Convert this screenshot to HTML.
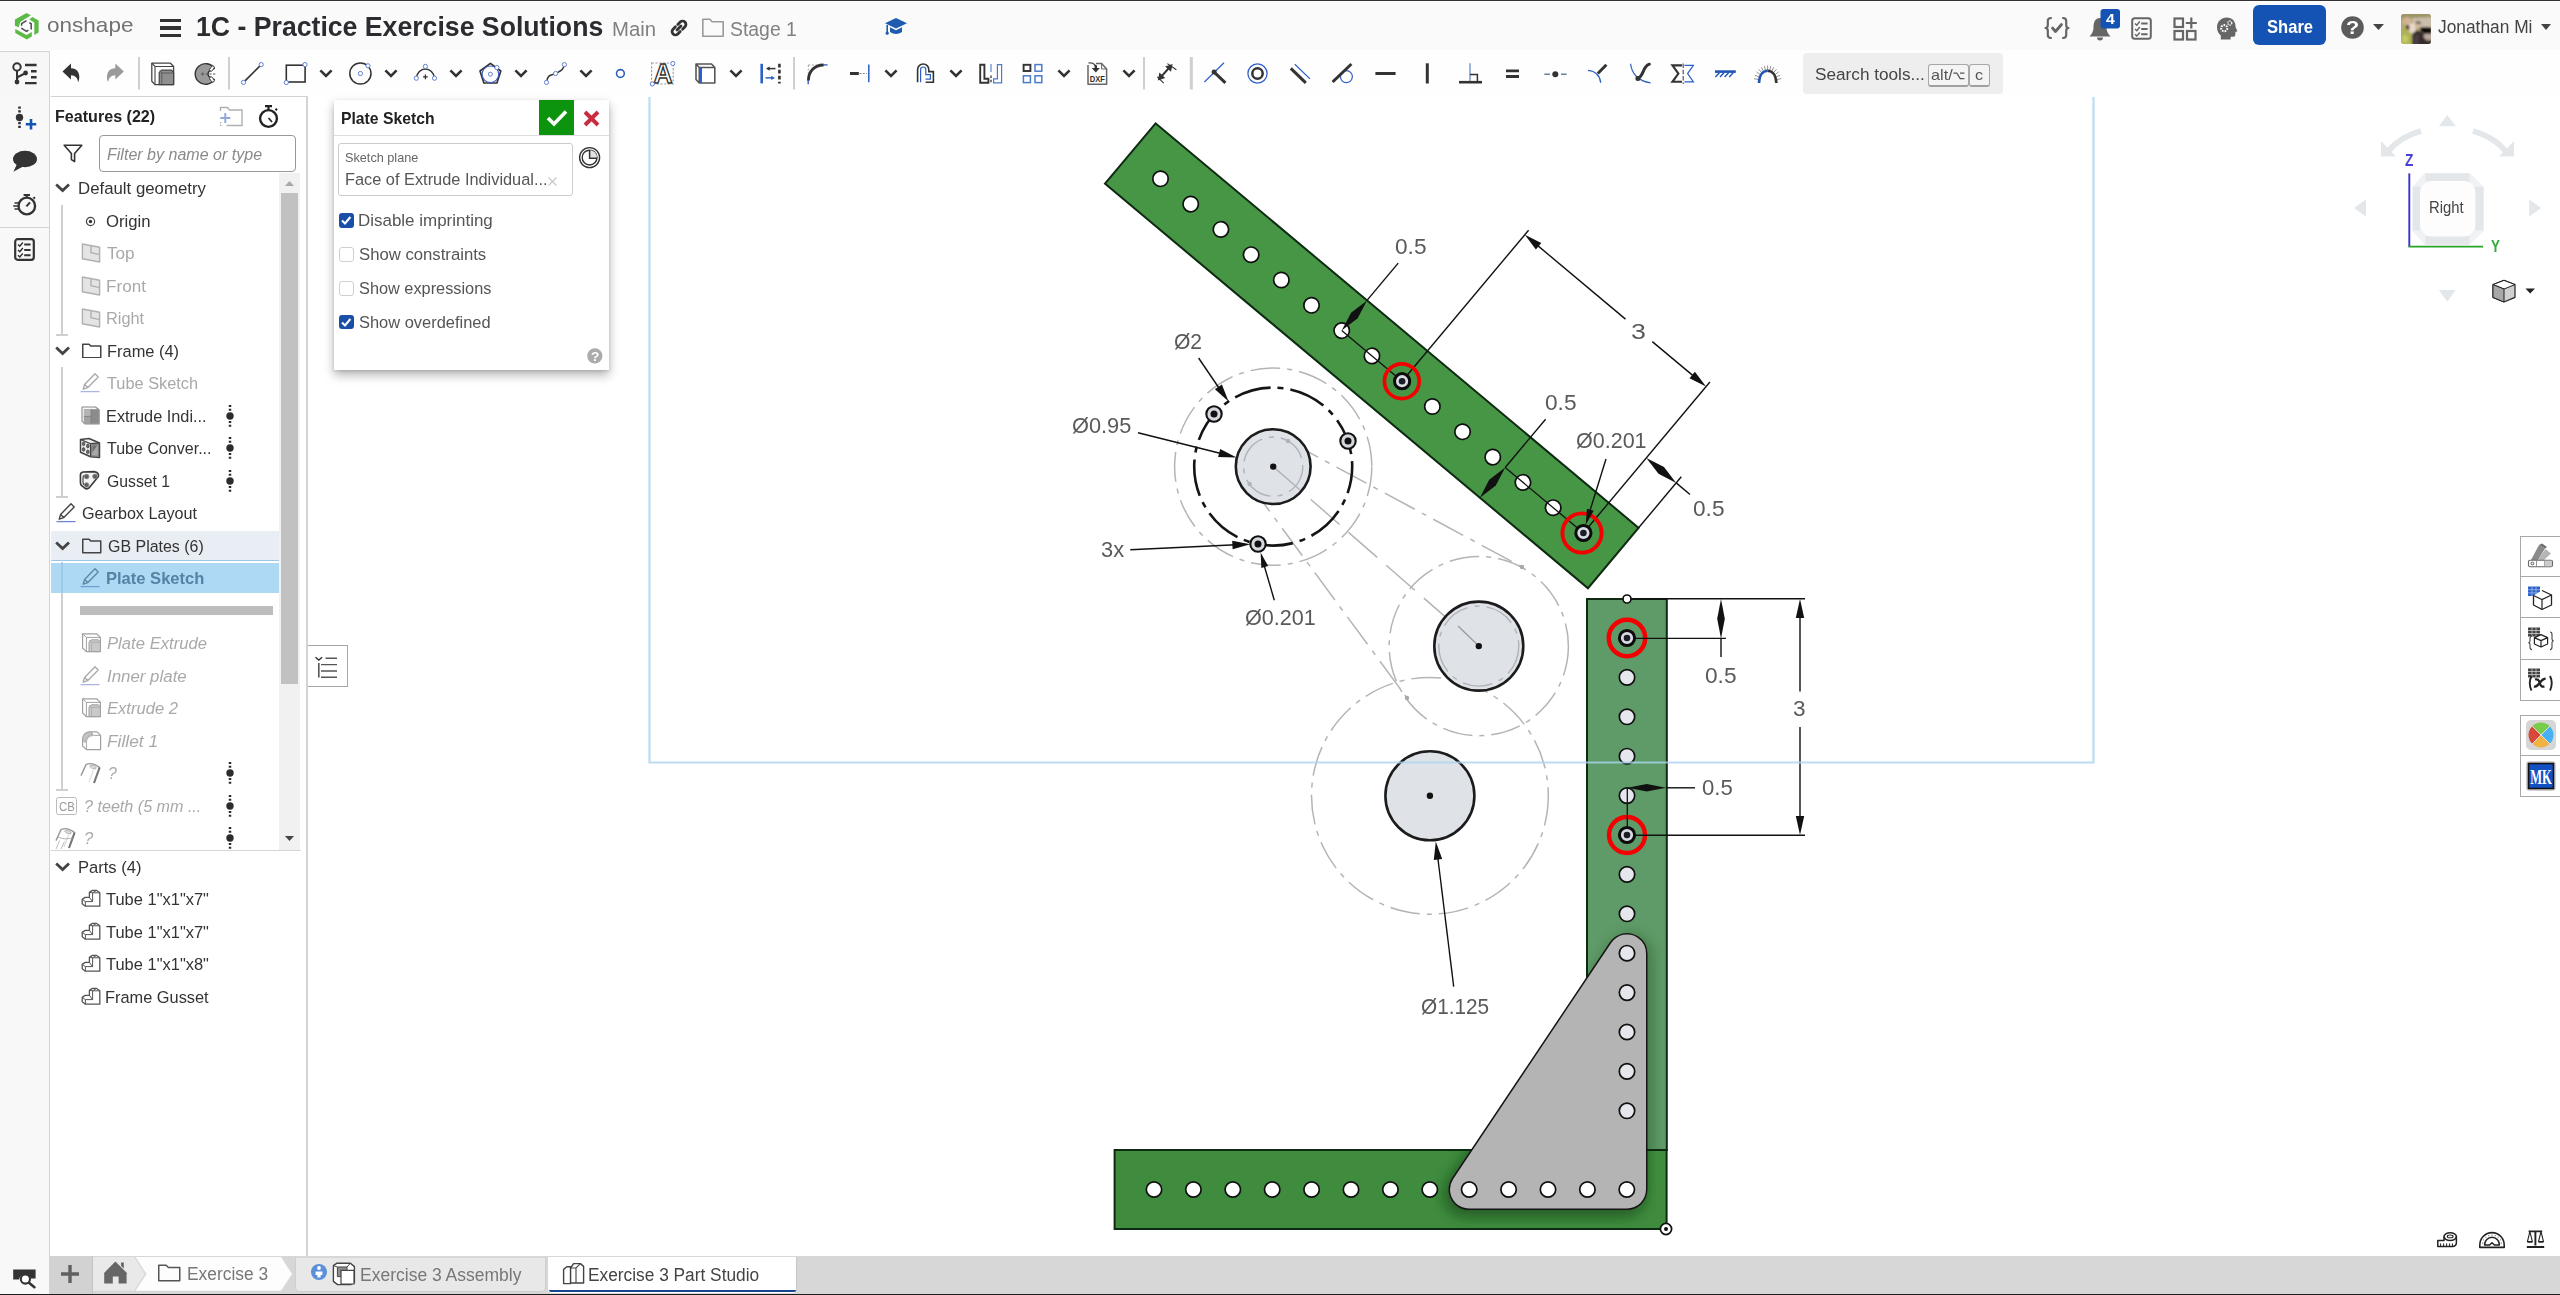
<!DOCTYPE html>
<html><head><meta charset="utf-8"><title>Onshape</title><style>
html,body{margin:0;padding:0;background:#fff;}
body{width:2560px;height:1295px;overflow:hidden;position:relative;font-family:"Liberation Sans",sans-serif;}
.b{position:absolute;display:block;}
.t{position:absolute;white-space:nowrap;line-height:1;transform-origin:0 50%;font-family:"Liberation Sans",sans-serif;}
</style></head><body>
<!-- canvas -->
<svg class="b" style="left:309px;top:97px" width="2251" height="1160" viewBox="309 97 2251 1160"><defs><filter id="gsh" x="-20%" y="-20%" width="140%" height="140%"><feGaussianBlur stdDeviation="7"/></filter><clipPath id="clipH"><rect x="1114" y="1150" width="552" height="79"/></clipPath><clipPath id="clipV"><rect x="1587" y="599" width="79.5" height="551"/></clipPath></defs><circle cx="1273.2" cy="466.6" r="98.6" fill="none" stroke="#b4b4b4" stroke-width="1.5" stroke-dasharray="30 7 5 7"/><circle cx="1478.8" cy="646.1" r="89.6" fill="none" stroke="#b4b4b4" stroke-width="1.5" stroke-dasharray="30 7 5 7"/><circle cx="1429.9" cy="795.8" r="118.4" fill="none" stroke="#b4b4b4" stroke-width="1.5" stroke-dasharray="30 7 5 7"/><path d="M1288.0 441.0 L1522.0 567.0" stroke="#b4b4b4" stroke-width="1.5" fill="none" stroke-dasharray="34 8 5 8"/><path d="M1249.6 484.0 L1407.0 698.0" stroke="#b4b4b4" stroke-width="1.5" fill="none" stroke-dasharray="34 8 5 8"/><path d="M1273.2 466.6 L1478.8 646.1" stroke="#b4b4b4" stroke-width="1.5" fill="none" stroke-dasharray="38 12"/><circle cx="1522" cy="567" r="2.2" fill="#a8a8a8"/><circle cx="1407" cy="698" r="2.2" fill="#a8a8a8"/><g transform="translate(1130.3,153.5) rotate(39.95)"><rect x="0" y="-39.4" width="630" height="78.8" fill="#469646" stroke="#0f2a12" stroke-width="2"/><circle cx="39.4" cy="0" r="7.7" fill="#fff" stroke="#101010" stroke-width="1.7"/><circle cx="78.8" cy="0" r="7.7" fill="#fff" stroke="#101010" stroke-width="1.7"/><circle cx="118.2" cy="0" r="7.7" fill="#fff" stroke="#101010" stroke-width="1.7"/><circle cx="157.6" cy="0" r="7.7" fill="#fff" stroke="#101010" stroke-width="1.7"/><circle cx="197.0" cy="0" r="7.7" fill="#fff" stroke="#101010" stroke-width="1.7"/><circle cx="236.4" cy="0" r="7.7" fill="#fff" stroke="#101010" stroke-width="1.7"/><circle cx="275.8" cy="0" r="7.7" fill="#fff" stroke="#101010" stroke-width="1.7"/><circle cx="315.2" cy="0" r="7.7" fill="#fff" stroke="#101010" stroke-width="1.7"/><circle cx="354.6" cy="0" r="7.7" fill="#fff" stroke="#101010" stroke-width="1.7"/><circle cx="394.0" cy="0" r="7.7" fill="#fff" stroke="#101010" stroke-width="1.7"/><circle cx="433.4" cy="0" r="7.7" fill="#fff" stroke="#101010" stroke-width="1.7"/><circle cx="472.8" cy="0" r="7.7" fill="#fff" stroke="#101010" stroke-width="1.7"/><circle cx="512.2" cy="0" r="7.7" fill="#fff" stroke="#101010" stroke-width="1.7"/><circle cx="551.6" cy="0" r="7.7" fill="#fff" stroke="#101010" stroke-width="1.7"/><circle cx="591.0" cy="0" r="7.7" fill="#fff" stroke="#101010" stroke-width="1.7"/></g><rect x="1114.6" y="1150" width="552" height="79" fill="#3f8c3f" stroke="#0f2a12" stroke-width="2"/><rect x="1587" y="599" width="79.8" height="551" fill="#5f9b68" stroke="#0f2a12" stroke-width="2"/><g clip-path="url(#clipH)"><path d="M1627 953.5 L1627 1189.5 L1469 1189.5 Z" transform="translate(-3,5)" fill="#0a300a" stroke="#0a300a" stroke-width="44" stroke-linejoin="round" filter="url(#gsh)" opacity="0.55"/></g><g clip-path="url(#clipV)"><path d="M1627 953.5 L1627 1189.5 L1469 1189.5 Z" transform="translate(3,3)" fill="#0a300a" stroke="#0a300a" stroke-width="44" stroke-linejoin="round" filter="url(#gsh)" opacity="0.35"/></g><path d="M1627 953.5 L1627 1189.5 L1469 1189.5 Z" fill="#151515" stroke="#151515" stroke-width="41" stroke-linejoin="round"/><path d="M1627 953.5 L1627 1189.5 L1469 1189.5 Z" fill="#b4b4b4" stroke="#b4b4b4" stroke-width="38" stroke-linejoin="round"/><circle cx="1154.0" cy="1189.5" r="7.7" fill="#fff" stroke="#101010" stroke-width="1.7"/><circle cx="1193.4" cy="1189.5" r="7.7" fill="#fff" stroke="#101010" stroke-width="1.7"/><circle cx="1232.8" cy="1189.5" r="7.7" fill="#fff" stroke="#101010" stroke-width="1.7"/><circle cx="1272.2" cy="1189.5" r="7.7" fill="#fff" stroke="#101010" stroke-width="1.7"/><circle cx="1311.6" cy="1189.5" r="7.7" fill="#fff" stroke="#101010" stroke-width="1.7"/><circle cx="1351.0" cy="1189.5" r="7.7" fill="#fff" stroke="#101010" stroke-width="1.7"/><circle cx="1390.4" cy="1189.5" r="7.7" fill="#fff" stroke="#101010" stroke-width="1.7"/><circle cx="1429.8" cy="1189.5" r="7.7" fill="#fff" stroke="#101010" stroke-width="1.7"/><circle cx="1469.2" cy="1189.5" r="7.7" fill="#fff" stroke="#101010" stroke-width="1.7"/><circle cx="1508.6" cy="1189.5" r="7.7" fill="#fff" stroke="#101010" stroke-width="1.7"/><circle cx="1548.0" cy="1189.5" r="7.7" fill="#fff" stroke="#101010" stroke-width="1.7"/><circle cx="1587.4" cy="1189.5" r="7.7" fill="#fff" stroke="#101010" stroke-width="1.7"/><circle cx="1626.8" cy="1189.5" r="7.7" fill="#fff" stroke="#101010" stroke-width="1.7"/><circle cx="1627.0" cy="677.4" r="7.7" fill="#e5e7ec" stroke="#101010" stroke-width="1.7"/><circle cx="1627.0" cy="716.8" r="7.7" fill="#e5e7ec" stroke="#101010" stroke-width="1.7"/><circle cx="1627.0" cy="756.2" r="7.7" fill="#e5e7ec" stroke="#101010" stroke-width="1.7"/><circle cx="1627.0" cy="795.6" r="7.7" fill="#e5e7ec" stroke="#101010" stroke-width="1.7"/><circle cx="1627.0" cy="874.4" r="7.7" fill="#e5e7ec" stroke="#101010" stroke-width="1.7"/><circle cx="1627.0" cy="913.8" r="7.7" fill="#e5e7ec" stroke="#101010" stroke-width="1.7"/><circle cx="1627.0" cy="953.2" r="7.7" fill="#e5e7ec" stroke="#101010" stroke-width="1.7"/><circle cx="1627.0" cy="992.6" r="7.7" fill="#e5e7ec" stroke="#101010" stroke-width="1.7"/><circle cx="1627.0" cy="1032.0" r="7.7" fill="#e5e7ec" stroke="#101010" stroke-width="1.7"/><circle cx="1627.0" cy="1071.4" r="7.7" fill="#e5e7ec" stroke="#101010" stroke-width="1.7"/><circle cx="1627.0" cy="1110.8" r="7.7" fill="#e5e7ec" stroke="#101010" stroke-width="1.7"/><circle cx="1273.2" cy="466.6" r="79" fill="none" stroke="#151515" stroke-width="2.6" stroke-dasharray="37 7 6 7" stroke-dashoffset="10"/><circle cx="1273.2" cy="466.6" r="37.4" fill="#dfe3e8" stroke="#1c1c1c" stroke-width="2.6"/><circle cx="1478.8" cy="646.1" r="44.5" fill="#dfe3e8" stroke="#1c1c1c" stroke-width="2.6"/><circle cx="1429.9" cy="795.8" r="44.5" fill="#dfe3e8" stroke="#1c1c1c" stroke-width="2.6"/><circle cx="1273.2" cy="466.6" r="29.6" fill="none" stroke="#b0b3b8" stroke-width="1.4" stroke-dasharray="30 7 5 7"/><circle cx="1478.8" cy="646.1" r="40" fill="none" stroke="#b0b3b8" stroke-width="1.4" stroke-dasharray="30 7 5 7"/><path d="M1273.2 466.6 L1300.0 490.0" stroke="#b0b3b8" stroke-width="1.4" fill="none"/><path d="M1478.8 646.1 L1458.0 626.0" stroke="#9a9da2" stroke-width="1.4" fill="none"/><circle cx="1288" cy="441" r="2.2" fill="#b0b3b8"/><circle cx="1249.6" cy="484" r="2.2" fill="#b0b3b8"/><circle cx="1273.2" cy="466.6" r="3.2" fill="#111"/><circle cx="1478.8" cy="646.1" r="3.2" fill="#111"/><circle cx="1429.9" cy="795.8" r="3.2" fill="#111"/><circle cx="1214" cy="414" r="7.7" fill="#d4d7de" stroke="#111" stroke-width="2.1"/><circle cx="1214" cy="414" r="3.5" fill="#111"/><circle cx="1348" cy="441" r="7.7" fill="#d4d7de" stroke="#111" stroke-width="2.1"/><circle cx="1348" cy="441" r="3.5" fill="#111"/><circle cx="1258" cy="544" r="7.7" fill="#d4d7de" stroke="#111" stroke-width="2.1"/><circle cx="1258" cy="544" r="3.5" fill="#111"/><path d="M1341.7 330.6 L1402.1 381.2" stroke="#111" stroke-width="1.3" fill="none"/><path d="M1505.2 467.5 L1583.4 533.0" stroke="#111" stroke-width="1.3" fill="none"/><path d="M1402.1 381.2 L1528.6 230.2" stroke="#111" stroke-width="1.4" fill="none"/><path d="M1583.4 533.0 L1709.9 382.0" stroke="#111" stroke-width="1.4" fill="none"/><path d="M1530.9 239.9 L1625.5 319.1" stroke="#111" stroke-width="1.4" fill="none"/><path d="M1652.3 341.6 L1699.9 381.4" stroke="#111" stroke-width="1.4" fill="none"/><path d="M1524.8 234.8 L1541.3 243.1 L1535.9 249.6 Z" fill="#111"/><path d="M1706.0 386.6 L1689.5 378.2 L1694.9 371.8 Z" fill="#111"/><path d="M1367.0 300.4 L1398.2 263.1" stroke="#111" stroke-width="1.4" fill="none"/><path d="M1341.7 330.6 L1357.7 318.3 L1367.0 300.4 L1351.1 312.7 Z" fill="#111"/><path d="M1545.6 419.2 L1505.2 467.5" stroke="#111" stroke-width="1.4" fill="none"/><path d="M1505.2 467.5 L1489.2 479.8 L1479.9 497.7 L1495.8 485.4 Z" fill="#111"/><path d="M1638.6 527.8 L1681.3 476.8" stroke="#111" stroke-width="1.4" fill="none"/><path d="M1646.3 457.9 L1658.5 473.7 L1676.2 482.9 L1664.0 467.1 Z" fill="#111"/><path d="M1676.2 482.9 L1690.0 494.5" stroke="#111" stroke-width="1.4" fill="none"/><circle cx="1402.1" cy="381.2" r="7.6" fill="#d8dbe2" stroke="#0c0c0c" stroke-width="3"/><circle cx="1402.1" cy="381.2" r="3.3" fill="#1c1c24"/><circle cx="1401.8" cy="381.2" r="17.4" fill="none" stroke="#f40000" stroke-width="3.7"/><circle cx="1583.4" cy="533.0" r="7.6" fill="#d8dbe2" stroke="#0c0c0c" stroke-width="3"/><circle cx="1583.4" cy="533.0" r="3.3" fill="#1c1c24"/><circle cx="1582.0" cy="533.0" r="19.6" fill="none" stroke="#f40000" stroke-width="3.9"/><circle cx="1627.0" cy="638.0" r="7.6" fill="#d8dbe2" stroke="#0c0c0c" stroke-width="3"/><circle cx="1627.0" cy="638.0" r="3.3" fill="#1c1c24"/><circle cx="1627.0" cy="638.0" r="18.2" fill="none" stroke="#f40000" stroke-width="4.5"/><circle cx="1627.0" cy="835.0" r="7.6" fill="#d8dbe2" stroke="#0c0c0c" stroke-width="3"/><circle cx="1627.0" cy="835.0" r="3.3" fill="#1c1c24"/><circle cx="1627.0" cy="835.0" r="18.0" fill="none" stroke="#f40000" stroke-width="4.4"/><path d="M1606.0 459.0 L1588.0 517.0" stroke="#111" stroke-width="1.4" fill="none"/><path d="M1585.6 525.0 L1587.0 508.7 L1593.7 510.7 Z" fill="#111"/><path d="M1198.6 358.0 L1221.0 391.0" stroke="#111" stroke-width="1.4" fill="none"/><path d="M1228.6 401.6 L1214.9 389.2 L1221.9 384.4 Z" fill="#111"/><path d="M1138.0 432.8 L1222.0 453.8" stroke="#111" stroke-width="1.4" fill="none"/><path d="M1236.6 457.4 L1218.1 457.1 L1220.2 449.0 Z" fill="#111"/><path d="M1130.3 549.8 L1236.0 544.8" stroke="#111" stroke-width="1.4" fill="none"/><path d="M1250.4 544.2 L1232.6 549.2 L1232.2 540.8 Z" fill="#111"/><path d="M1274.3 600.2 L1264.0 565.0" stroke="#111" stroke-width="1.4" fill="none"/><path d="M1260.6 552.6 L1268.1 566.0 L1261.4 568.0 Z" fill="#111"/><path d="M1453.7 986.6 L1437.6 856.0" stroke="#111" stroke-width="1.4" fill="none"/><path d="M1435.8 841.6 L1442.2 858.9 L1433.8 860.0 Z" fill="#111"/><path d="M1631.5 598.8 L1805.0 598.8" stroke="#111" stroke-width="1.4" fill="none"/><path d="M1636.0 638.4 L1726.0 638.4" stroke="#111" stroke-width="1.4" fill="none"/><path d="M1636.0 835.2 L1805.0 835.2" stroke="#111" stroke-width="1.4" fill="none"/><path d="M1721.0 599.0 L1717.2 618.7 L1721.0 638.4 L1724.8 618.7 Z" fill="#111"/><path d="M1721.0 638.0 L1721.0 657.0" stroke="#111" stroke-width="1.4" fill="none"/><path d="M1800.0 612.0 L1800.0 691.5" stroke="#111" stroke-width="1.4" fill="none"/><path d="M1800.0 727.0 L1800.0 822.0" stroke="#111" stroke-width="1.4" fill="none"/><path d="M1800.0 599.0 L1804.2 618.0 L1795.8 618.0 Z" fill="#111"/><path d="M1800.0 835.0 L1795.8 816.0 L1804.2 816.0 Z" fill="#111"/><path d="M1627.5 787.8 L1646.8 791.5 L1666.0 787.8 L1646.8 784.0 Z" fill="#111"/><path d="M1666.0 787.8 L1695.0 787.8" stroke="#111" stroke-width="1.4" fill="none"/><path d="M1627.3 788.0 L1627.3 826.0" stroke="#111" stroke-width="1.3" fill="none"/><circle cx="1627" cy="599" r="4" fill="#fff" stroke="#111" stroke-width="1.7"/><circle cx="1666" cy="1229" r="5.6" fill="#fff" stroke="#111" stroke-width="1.7"/><circle cx="1666" cy="1229" r="2" fill="#111"/><path d="M649.5 97 V762.5 H2093.5 V97" fill="none" stroke="#a9d4f0" stroke-opacity="0.8" stroke-width="2.2"/></svg><span class="t" style="left:1394.71px;transform:scaleX(1.0502);top:236px;font-size:21.6px;color:#5a5a5a;">0.5</span><span class="t" style="left:1630.88px;transform:scaleX(1.2398);top:321px;font-size:21.6px;color:#5a5a5a;">3</span><span class="t" style="left:1544.51px;transform:scaleX(1.0502);top:392px;font-size:21.6px;color:#5a5a5a;">0.5</span><span class="t" style="left:1576.25px;transform:scaleX(0.9965);top:430px;font-size:21.6px;color:#5a5a5a;">Ø0.201</span><span class="t" style="left:1693.11px;transform:scaleX(1.0502);top:498px;font-size:21.6px;color:#5a5a5a;">0.5</span><span class="t" style="left:1173.57px;transform:scaleX(0.9749);top:331px;font-size:21.6px;color:#5a5a5a;">Ø2</span><span class="t" style="left:1071.65px;transform:scaleX(1.0075);top:415px;font-size:21.6px;color:#5a5a5a;">Ø0.95</span><span class="t" style="left:1100.57px;transform:scaleX(1.0111);top:539px;font-size:21.6px;color:#5a5a5a;">3x</span><span class="t" style="left:1244.65px;transform:scaleX(0.9994);top:607px;font-size:21.6px;color:#5a5a5a;">Ø0.201</span><span class="t" style="left:1705.01px;transform:scaleX(1.0502);top:665px;font-size:21.6px;color:#5a5a5a;">0.5</span><span class="t" style="left:1793.44px;transform:scaleX(1.0445);top:698px;font-size:21.6px;color:#5a5a5a;">3</span><span class="t" style="left:1701.93px;transform:scaleX(1.0254);top:777px;font-size:21.6px;color:#5a5a5a;">0.5</span><span class="t" style="left:1421.28px;transform:scaleX(0.9612);top:996px;font-size:21.6px;color:#5a5a5a;">Ø1.125</span>
<!-- chrome -->
<div class="b" style="left:0px;top:0px;width:2560px;height:1px;background:#333"></div>
<div class="b" style="left:0px;top:2px;width:2560px;height:48px;background:#fafafa"></div>
<div class="b" style="left:0px;top:50px;width:2560px;height:47px;background:#fefefe"></div>
<div class="b" style="left:0px;top:51px;width:50px;height:1244px;background:#f8f8f8;border-right:1px solid #d4d4d4;border-top:1px solid #d4d4d4;box-sizing:border-box"></div>
<div class="b" style="left:0px;top:51px;width:50px;height:46px;background:#f7f7f7;border-right:1px solid #d4d4d4;border-top:1px solid #d4d4d4;box-sizing:border-box"></div>
<div class="b" style="left:0px;top:227px;width:50px;height:1px;background:#d4d4d4"></div>
<div class="b" style="left:51px;top:96px;width:257px;height:1161px;background:#fff;border-top:1.5px solid #d2d2d2;border-right:2px solid #d3d3d3;box-sizing:border-box"></div>
<svg class="b" style="left:8px;top:6px" width="40" height="40" viewBox="8 6 40 40"><g fill="#5cba47"><path d="M26.5 12.9 L30.9 15.3 L20.2 21.9 L18.7 27.3 L14.9 25.8 L14.9 19.6 Z"/><path d="M32.4 17 L38.6 20.4 L38.6 32.6 L34.3 35 L34.3 22.4 L29.3 19.4 Z"/><path d="M15.3 29 L26.5 34.9 L31.8 31.9 L31.8 36.4 L26.8 39.4 L15.3 32.9 Z"/></g><path d="M21.6 25.8 V23.6 L26.5 20.7 M29.3 22.7 L31.2 23.8 V29.5 M21.3 28.2 L26.5 31.3 L28.4 30.1" fill="none" stroke="#4c4c4c" stroke-width="1.5"/></svg>
<span class="t" style="left:47.35px;transform:scaleX(1.0728);top:14px;font-size:21px;color:#727272;">onshape</span>
<div class="b" style="left:160.3px;top:19.0px;width:20.4px;height:3.3px;background:#333"></div>
<div class="b" style="left:160.3px;top:26.4px;width:20.4px;height:3.3px;background:#333"></div>
<div class="b" style="left:160.3px;top:33.8px;width:20.4px;height:3.3px;background:#333"></div>
<span class="t" style="left:195.82px;transform:scaleX(0.9516);top:13px;font-size:28px;color:#2b2b30;font-weight:bold;">1C - Practice Exercise Solutions</span>
<span class="t" style="left:612.34px;transform:scaleX(0.9898);top:19px;font-size:20.5px;color:#808080;">Main</span>
<svg class="b" style="left:669px;top:18px;" width="20" height="20" viewBox="0 0 20 20"><g fill="none" stroke="#333" stroke-width="2.5" stroke-linecap="round" transform="rotate(-45 10 10) translate(10 10) scale(1.12) translate(-10 -10)"><path d="M8.5 7 H5.5 a3 3 0 0 0 0 6 H8.5"/><path d="M11.5 7 H14.5 a3 3 0 0 1 0 6 H11.5"/><path d="M7.5 10 H12.5"/></g></svg>
<svg class="b" style="left:702px;top:18px;" width="22" height="19" viewBox="0 0 22 19"><path d="M0.8 18.2 V1.3 H7.92 L10.120000000000001 3.8000000000000003 H21.2 V18.2 Z" fill="none" stroke="#999" stroke-width="1.6" stroke-linejoin="round"/></svg>
<span class="t" style="left:730.12px;transform:scaleX(0.9456);top:19px;font-size:20.5px;color:#808080;">Stage 1</span>
<svg class="b" style="left:885px;top:17px;" width="23" height="20" viewBox="0 0 23 20"><path d="M11 1 L22 6.2 L11 11.4 L0 6.2 Z" fill="#1f5cb0"/><path d="M5 10.3 V15 Q11 19 17 15 V10.3 L11 13.2 Z" fill="#1f5cb0"/><path d="M2.2 8 V15.5" stroke="#1f5cb0" stroke-width="1.6"/><circle cx="2.2" cy="16.2" r="1.6" fill="#1f5cb0"/></svg>
<svg class="b" style="left:2043.5px;top:16.4px;" width="26" height="24" viewBox="0 0 26 24"><g fill="none" stroke="#666" stroke-width="2.2" stroke-linecap="round" stroke-linejoin="round"><path d="M7 2 Q3.8 2 3.8 5 V9 Q3.8 12 1.5 12 Q3.8 12 3.8 15 V19 Q3.8 22 7 22"/><path d="M19 2 Q22.2 2 22.2 5 V9 Q22.2 12 24.5 12 Q22.2 12 22.2 15 V19 Q22.2 22 19 22"/><path d="M8.5 12 L11.5 15.5 L17.5 8.5" stroke-width="2.8"/></g></svg>
<svg class="b" style="left:2088px;top:9px;" width="33" height="33" viewBox="0 0 33 33"><path d="M12 9 C7 9 5.5 13.5 5.5 18 C5.5 23 3.5 25 1.5 27.5 H22.5 C20.5 25 18.5 23 18.5 18 C18.5 13.5 17 9 12 9 Z" fill="#666"/><path d="M9 28.5 a3 3 0 0 0 6 0 Z" fill="#666"/><rect x="12.5" y="0" width="19.5" height="19.5" rx="3" fill="#1452b3"/></svg><span class="t" style="left:2105.96px;transform:scaleX(1.0924);top:12px;font-size:14.5px;color:#fff;font-weight:bold;">4</span>
<svg class="b" style="left:2131px;top:17px;" width="22" height="24" viewBox="0 0 22 24"><rect x="1.2" y="1.2" width="18.6" height="20.6" rx="2.5" fill="none" stroke="#666" stroke-width="2"/><g stroke="#666" stroke-width="2" fill="none"><path d="M10.2 6.5 H16.6 M10.2 12 H16.6 M10.2 17.3 H16.6"/><path d="M4 6.5 L5.8 8.2 L8.8 4.6 M4 12 L5.8 13.7 L8.8 10.1 M4 17.3 L5.8 19 L8.8 15.4" stroke-width="1.5"/></g></svg>
<svg class="b" style="left:2172.6px;top:16.8px;" width="25" height="24" viewBox="0 0 25 24"><g fill="none" stroke="#666" stroke-width="2.2"><rect x="1.5" y="1.5" width="8.5" height="8.5"/><rect x="1.5" y="14" width="8.5" height="8.5"/><rect x="14" y="14" width="8.5" height="8.5"/><path d="M18.3 0.5 V11.5 M12.8 6 H23.8"/></g></svg>
<svg class="b" style="left:2216px;top:17px;" width="23" height="24" viewBox="0 0 23 24"><path d="M11 0.6 C4.8 0.6 1 5 1 10.4 C1 14.2 2.8 16.6 4.8 18.4 V22.6 H14.6 V19.8 H17.4 Q19.4 19.8 19.4 17.8 V15 L21.4 14.2 L19.6 10 C19.6 4.4 16.2 0.6 11 0.6 Z" fill="#666"/><circle cx="8.2" cy="11.2" r="3.1" fill="none" stroke="#fafafa" stroke-width="2" stroke-dasharray="1.7 1"/><circle cx="13.8" cy="6" r="2" fill="none" stroke="#fafafa" stroke-width="1.4" stroke-dasharray="1.2 0.8"/></svg>
<div class="b" style="left:2253px;top:5px;width:73px;height:40px;background:#1452b3;border-radius:6px"></div>
<span class="t" style="left:2266.82px;transform:scaleX(0.8954);top:18px;font-size:18.5px;color:#fff;font-weight:bold;">Share</span>
<svg class="b" style="left:2341px;top:16px;" width="23" height="23" viewBox="0 0 23 23"><circle cx="11.5" cy="11.5" r="11.3" fill="#5c5c5c"/></svg><span class="t" style="left:2346.01px;transform:scaleX(1.1705);top:19px;font-size:18.5px;color:#fff;font-weight:bold;">?</span>
<svg class="b" style="left:2373px;top:24px;" width="11" height="6" viewBox="0 0 11 6"><path d="M0 0 H11 L5.5 6 Z" fill="#444"/></svg>
<svg class="b" style="left:2401px;top:14px;" width="30" height="30" viewBox="0 0 30 30"><defs><clipPath id="avc"><rect x="0" y="0" width="30" height="30" rx="2.5"/></clipPath><filter id="avb" x="-20%" y="-20%" width="140%" height="140%"><feGaussianBlur stdDeviation="0.9"/></filter></defs><g clip-path="url(#avc)"><g filter="url(#avb)"><rect x="-4" y="-4" width="38" height="38" fill="#b3a67c"/><rect x="-4" y="-4" width="38" height="8" fill="#9c9462"/><path d="M11 4 L31 3 L31 15 L20 13 L12 9 Z" fill="#cbbdab"/><ellipse cx="6" cy="7.5" rx="4.6" ry="4.4" fill="#d0b391"/><path d="M-2 13 L6 14 L11 19 L11 32 L-2 32 Z" fill="#aeb058"/><ellipse cx="4" cy="25" rx="3.2" ry="4" fill="#c4ca62"/><path d="M8 10 L14 9 L15 17 L11 20 L7 16 Z" fill="#ead9cd"/><path d="M4.6 11.4 L8 11 L8.6 15.4 L6 15.6 Z" fill="#2a2116"/><path d="M14.5 8.6 Q17.5 5.6 20.4 9.6 L19.4 10.6 Q17.4 8 15.4 10 Z" fill="#4a4030"/><path d="M14 10.4 L21.4 13.6 L20.4 15.4 L13.6 12.4 Z" fill="#d6bb96"/><path d="M11 20 L16 16 L22 19 L31 18 L31 32 L11 32 Z" fill="#362b2a"/><path d="M19 13.6 L24 13 L31 13.6 L31 19.4 L24 19.6 L19 17 Z" fill="#0b0b0b"/><path d="M23 20 L31 19.6 L31 26 L26 26.6 L22.6 23.6 Z" fill="#b8a89e"/><path d="M13 21 L18 20 L18 32 L12 32 Z" fill="#4a3c40"/></g></g></svg>
<span class="t" style="left:2438.33px;transform:scaleX(0.9905);top:19px;font-size:17.5px;color:#444;">Jonathan Mi</span>
<svg class="b" style="left:2541px;top:24px;" width="10" height="6" viewBox="0 0 10 6"><path d="M0 0 H10 L5.0 6 Z" fill="#444"/></svg>
<svg class="b" style="left:50px;top:52px" width="1750" height="45" viewBox="50 52 1750 45"><path d="M62.5 71.6 L71 63.6 V68.3 C77.5 68.3 81.5 74.5 78.2 82.3 C77.6 78.3 75.5 75.3 71 75.2 V79.6 Z" fill="#333"/><path d="M62.5 71.6 L71 63.6 V68.3 C77.5 68.3 81.5 74.5 78.2 82.3 C77.6 78.3 75.5 75.3 71 75.2 V79.6 Z" fill="#9a9a9a" transform="translate(186.3,0) scale(-1,1)"/><rect x="138.0" y="57" width="2" height="32.5" fill="#cfcfcf"/><path d="M151.8 63.2 H170.5 L173.6 66.5 V84.6 H155 L151.8 81.3 Z" fill="#fff" stroke="#444" stroke-width="1.3" stroke-linejoin="round"/><path d="M151.8 63.2 L155 66.5 H173.6 M155 66.5 V84.6" fill="none" stroke="#444" stroke-width="1.1"/><path d="M159.2 72.6 L161.5 70.2 H171.6 L173.6 72.6 V84.6 H159.2 Z" fill="#8f8f8f" stroke="#444" stroke-width="1.2" stroke-linejoin="round"/><path d="M161.8 73 H173.4 M161.8 73 V84.4 M161.8 73 L159.6 70.6" fill="none" stroke="#555" stroke-width="0.9"/><path d="M214.3 68.3 A10.4 10.4 0 1 0 214.3 79.7 L209 76.6 A4.2 4.2 0 0 1 209 71.4 Z" fill="#9a9a9a" stroke="#333" stroke-width="1.4" stroke-linejoin="round"/><ellipse cx="211.9" cy="68.6" rx="3.1" ry="1.6" transform="rotate(-52 211.9 68.6)" fill="#fff" stroke="#333" stroke-width="0.9"/><ellipse cx="211.9" cy="79.4" rx="3.1" ry="1.6" transform="rotate(52 211.9 79.4)" fill="#fff" stroke="#333" stroke-width="0.9"/><path d="M202 74 H216.5" stroke="#555" stroke-width="1.1" stroke-dasharray="2.2 1.5"/><path d="M203.2 72.4 L201.2 74 L203.2 75.6" fill="none" stroke="#555" stroke-width="0.9"/><rect x="228.0" y="57" width="2" height="32.5" fill="#cfcfcf"/><path d="M243.5 82.4 L261.2 64.6" stroke="#333" stroke-width="1.6"/><circle cx="243.5" cy="82.4" r="2.1" fill="#fff" stroke="#5f7fd0" stroke-width="1.0"/><circle cx="261.2" cy="64.6" r="2.1" fill="#fff" stroke="#5f7fd0" stroke-width="1.0"/><rect x="286.3" y="65.2" width="18.8" height="16.8" fill="none" stroke="#333" stroke-width="1.6"/><circle cx="305" cy="64.6" r="2.1" fill="#fff" stroke="#5f7fd0" stroke-width="1.0"/><circle cx="286.3" cy="82.5" r="2.1" fill="#fff" stroke="#5f7fd0" stroke-width="1.0"/><path d="M320.4 70.3 L326 75.89999999999999 L331.6 70.3" fill="none" stroke="#333" stroke-width="2.6"/><circle cx="360.4" cy="73.5" r="10.6" fill="none" stroke="#333" stroke-width="1.5"/><circle cx="360.4" cy="73.5" r="2.1" fill="#fff" stroke="#5f7fd0" stroke-width="1.0"/><circle cx="368" cy="65.8" r="2.1" fill="#fff" stroke="#5f7fd0" stroke-width="1.0"/><path d="M385.4 70.3 L391 75.89999999999999 L396.6 70.3" fill="none" stroke="#333" stroke-width="2.6"/><path d="M416.3 77.9 A9.2 10.5 0 0 1 434.5 77.9" fill="none" stroke="#333" stroke-width="1.5"/><path d="M425.4 74.4 V79.2 M423 76.8 H427.8" stroke="#333" stroke-width="1.3"/><circle cx="416.3" cy="78.2" r="2.1" fill="#fff" stroke="#5f7fd0" stroke-width="1.0"/><circle cx="434.5" cy="78.2" r="2.1" fill="#fff" stroke="#5f7fd0" stroke-width="1.0"/><circle cx="425.4" cy="66.4" r="2.1" fill="#fff" stroke="#5f7fd0" stroke-width="1.0"/><path d="M450.4 70.3 L456 75.89999999999999 L461.6 70.3" fill="none" stroke="#333" stroke-width="2.6"/><path d="M490.4 63.4 L500.8 71 L496.9 83 H483.9 L480 71 Z" fill="none" stroke="#333" stroke-width="1.7" stroke-linejoin="round"/><circle cx="490.4" cy="74.3" r="8.3" fill="none" stroke="#3b5fc0" stroke-width="1.1"/><circle cx="490.4" cy="74.2" r="2" fill="#fff" stroke="#5f7fd0" stroke-width="1.0"/><circle cx="496.9" cy="67.6" r="2.1" fill="#fff" stroke="#5f7fd0" stroke-width="1.0"/><path d="M515.4 70.3 L521 75.89999999999999 L526.6 70.3" fill="none" stroke="#333" stroke-width="2.6"/><path d="M546.5 82.4 C547.5 73 553 75.5 555.6 73.5 C559 71.5 563.5 71 564.4 64.6" fill="none" stroke="#333" stroke-width="1.5"/><circle cx="546.5" cy="82.4" r="2.1" fill="#fff" stroke="#5f7fd0" stroke-width="1.0"/><circle cx="555.6" cy="73.5" r="2.1" fill="#fff" stroke="#5f7fd0" stroke-width="1.0"/><circle cx="564.4" cy="64.6" r="2.1" fill="#fff" stroke="#5f7fd0" stroke-width="1.0"/><path d="M580.4 70.3 L586 75.89999999999999 L591.6 70.3" fill="none" stroke="#333" stroke-width="2.6"/><circle cx="620.4" cy="73.5" r="3.9" fill="#fff" stroke="#2d5fc4" stroke-width="1.6"/><rect x="651.6" y="63" width="21.6" height="21" fill="none" stroke="#999" stroke-width="1.1" stroke-dasharray="2.2 1.6"/><text x="653.6" y="82.9" font-family="Liberation Sans, sans-serif" font-weight="bold" font-size="28" fill="#fff" stroke="#333" stroke-width="1.4" textLength="19" lengthAdjust="spacingAndGlyphs">A</text><circle cx="672.8" cy="63.5" r="2.1" fill="#fff" stroke="#5f7fd0" stroke-width="1.0"/><circle cx="652.3" cy="83.9" r="2.1" fill="#fff" stroke="#5f7fd0" stroke-width="1.0"/><path d="M696 64 H711.5 L714.8 67.5 V83 H699.3 L696 79.5 Z M696 64 L699.3 67.5 H714.8 M699.3 67.5 V83" fill="#fff" stroke="#555" stroke-width="1.6" stroke-linejoin="round"/><path d="M699.2 67.5 H702 V83 H699.2 Z" fill="#2d5fc4"/><path d="M730.4 70.3 L736 75.89999999999999 L741.6 70.3" fill="none" stroke="#333" stroke-width="2.6"/><rect x="760.4" y="63.8" width="2.6" height="19.6" fill="#2d5fc4"/><path d="M779.4 63.8 V83.4" stroke="#333" stroke-width="2.6" stroke-dasharray="3.6 2.4"/><path d="M775.5 68.6 H767.5" stroke="#333" stroke-width="1.5"/><path d="M766 68.6 L769.6 66.4 V70.8 Z" fill="#333"/><path d="M765.5 77.9 H773" stroke="#2d5fc4" stroke-width="1.5"/><path d="M775 77.9 L771.2 75.7 V80.1 Z" fill="#2d5fc4"/><rect x="793.0" y="57" width="2" height="32.5" fill="#cfcfcf"/><path d="M808.3 65 H827 M808.3 65 V84" stroke="#999" stroke-width="0.9" stroke-dasharray="2 1.6" fill="none"/><path d="M808.2 84.3 V80 M823 64.9 H827.6" stroke="#2d5fc4" stroke-width="1.3" fill="none"/><path d="M808.4 80.5 C808.6 71 814.5 65.2 823.5 65" fill="none" stroke="#333" stroke-width="2.8"/><path d="M850 73.5 H858.8" stroke="#333" stroke-width="3"/><path d="M859.5 73.5 H867" stroke="#888" stroke-width="1" stroke-dasharray="2 1.3"/><path d="M868.8 64.4 V82.2" stroke="#2d5fc4" stroke-width="1.5"/><path d="M885.4 70.3 L891 75.89999999999999 L896.6 70.3" fill="none" stroke="#333" stroke-width="2.6"/><path d="M917.6 82.2 V69.6 A5.6 5.6 0 0 1 928.8 69.6 V71.6 H933.4 V82.2 H925.6" fill="none" stroke="#333" stroke-width="1.6"/><path d="M920.6 82.2 V69.6 A2.6 2.6 0 0 1 925.8 69.6 V74.6 H930.4 V79.2 H925.6" fill="none" stroke="#2d5fc4" stroke-width="1.2"/><path d="M950.4 70.3 L956 75.89999999999999 L961.6 70.3" fill="none" stroke="#333" stroke-width="2.6"/><path d="M980.2 64.8 H984.4 V78.8 H988.4 V82.8 H980.2 Z" fill="none" stroke="#333" stroke-width="1.9"/><path d="M991 75.5 V83.5" stroke="#333" stroke-width="1.3" stroke-dasharray="2.6 1.6"/><path d="M991 64 V72" stroke="#4a7cc9" stroke-width="1.1"/><path d="M1001.6 64.6 H997.4 V78.8 H993.6 V82.9 H1001.6 Z" fill="none" stroke="#4a7cc9" stroke-width="1.2"/><rect x="1023.6" y="64.8" width="6.8" height="6.2" fill="none" stroke="#333" stroke-width="1.9"/><g fill="none" stroke="#4a7cc9" stroke-width="1.5"><rect x="1035" y="64.6" width="6.8" height="6.6"/><rect x="1023.4" y="75.8" width="7" height="6.8"/><rect x="1035" y="75.8" width="6.8" height="6.8"/></g><path d="M1058.4 70.3 L1064 75.89999999999999 L1069.6 70.3" fill="none" stroke="#333" stroke-width="2.6"/><path d="M1088 65 V84.2 H1106.6 V69 L1101.6 63.6 H1096" fill="#fff" stroke="#666" stroke-width="1.5" stroke-linejoin="round"/><path d="M1101.6 63.6 V69 H1106.6" fill="none" stroke="#666" stroke-width="1"/><path d="M1088.5 63 Q1095 62.5 1095.8 67.5" fill="none" stroke="#555" stroke-width="1.3"/><path d="M1094.6 64.5 V68 H1091.8 L1095.8 72.6 L1099.8 68 H1097 V65.5 Z" fill="#333"/><text x="1089.8" y="81.6" font-family="Liberation Sans, sans-serif" font-weight="bold" font-size="8.2" fill="#333" textLength="15.2" lengthAdjust="spacingAndGlyphs">DXF</text><path d="M1123.4 70.3 L1129 75.89999999999999 L1134.6 70.3" fill="none" stroke="#333" stroke-width="2.6"/><rect x="1143.0" y="57" width="2" height="32.5" fill="#cfcfcf"/><path d="M1160.6 77.4 L1169.8 67" stroke="#333" stroke-width="2"/><path d="M1157.8 80.4 L1159.4 72.6 L1165.2 78 Z M1172.6 64 L1171 71.8 L1165.2 66.4 Z" fill="#333"/><path d="M1157.2 76.8 L1163.8 83.2 M1167.4 63.6 L1176.4 69.8" stroke="#333" stroke-width="1.1"/><rect x="1189.8" y="57" width="3" height="32.5" fill="#cfcfcf"/><path d="M1204.4 82 L1224 62.7" stroke="#2d5fc4" stroke-width="1.2"/><path d="M1214.4 72.4 L1225.4 82.8" stroke="#333" stroke-width="3"/><circle cx="1214.1" cy="72" r="2.5" fill="#333"/><circle cx="1257.5" cy="73.5" r="9.6" fill="none" stroke="#2d5fc4" stroke-width="1.3"/><circle cx="1257.5" cy="73.5" r="5.2" fill="none" stroke="#333" stroke-width="2.5"/><path d="M1290.8 68.4 L1305.8 82.8" stroke="#333" stroke-width="3"/><path d="M1294.8 64.2 L1310 78.9" stroke="#2d5fc4" stroke-width="1.2"/><circle cx="1346.4" cy="76.6" r="6" fill="none" stroke="#2d5fc4" stroke-width="1.2"/><path d="M1332.6 82 L1351.4 64" stroke="#333" stroke-width="3"/><path d="M1375.4 73.5 H1395.6" stroke="#333" stroke-width="3"/><path d="M1427.3 63.3 V83.5" stroke="#333" stroke-width="3"/><path d="M1470 63.3 V82" stroke="#5b82c4" stroke-width="1.2"/><path d="M1470 74.6 H1477.4 V82" fill="none" stroke="#333" stroke-width="1.5"/><path d="M1459 82.2 H1482" stroke="#333" stroke-width="2.6"/><path d="M1506 70.8 H1519 M1506 76.5 H1519" stroke="#333" stroke-width="2.8"/><circle cx="1555.3" cy="74.2" r="3" fill="#333"/><path d="M1544.3 74.2 H1550 M1561 74.2 H1566.6" stroke="#6b7f9a" stroke-width="1.4"/><path d="M1588 70.3 C1595.5 71 1600 76 1600.7 82.7" fill="none" stroke="#2d5fc4" stroke-width="1.3"/><path d="M1597.8 73.6 L1606.4 64.8" stroke="#333" stroke-width="2.9"/><path d="M1630.6 63.8 C1631.5 73 1638 81.5 1650.6 82.8" fill="none" stroke="#2d5fc4" stroke-width="1.2"/><path d="M1638.2 78.4 C1645 74 1642 67 1649.4 64.2" fill="none" stroke="#333" stroke-width="2.9" stroke-linecap="round"/><circle cx="1637.9" cy="78.5" r="2.5" fill="#333"/><path d="M1682 65.4 H1672.4 L1678.4 73.6 L1672.4 81.8 H1682" fill="none" stroke="#333" stroke-width="2.1"/><path d="M1684.4 65.4 H1693.4 L1687.6 73.6 L1693.4 81.8 H1684.4" fill="none" stroke="#2d5fc4" stroke-width="1.2"/><path d="M1683.2 63.5 V84" stroke="#555" stroke-width="1.2" stroke-dasharray="4.5 1.8"/><path d="M1715 71.6 H1735.8" stroke="#1f55b5" stroke-width="2.6"/><path d="M1719.4 72.8 L1715.4 77 M1724 72.8 L1720 77 M1728.6 72.8 L1724.6 77 M1733.2 72.8 L1729.2 77" stroke="#1f55b5" stroke-width="1.4"/><path d="M1759.1 79.6 L1754.0 78.7 M1759.7 77.2 L1754.9 75.2 M1760.7 75.1 L1756.5 71.9 M1762.1 73.2 L1758.7 69.2 M1763.7 71.8 L1761.4 67.2 M1765.6 71.0 L1764.4 65.9 M1767.6 70.7 L1767.6 65.5 M1769.6 71.0 L1770.8 65.9 M1771.5 71.8 L1773.8 67.2 M1773.1 73.2 L1776.5 69.2 M1774.5 75.1 L1778.7 71.9 M1775.5 77.2 L1780.3 75.2 M1776.1 79.6 L1781.2 78.7 " stroke="#888" stroke-width="0.9"/><path d="M1759 83 C1759.4 75 1763 70.8 1767.6 70.8" fill="none" stroke="#1f55b5" stroke-width="2.6"/><path d="M1767.6 70.8 C1772.2 70.8 1775.8 75 1776.4 83" fill="none" stroke="#333" stroke-width="2.6"/></svg>
<div class="b" style="left:1803px;top:53px;width:200px;height:41px;background:#eeeeee;border-radius:4px"></div>
<span class="t" style="left:1814.92px;transform:scaleX(0.9998);top:66px;font-size:17.2px;color:#444;">Search tools...</span>
<div class="b" style="left:1928px;top:64px;width:41px;height:22.5px;background:#f4f4f4;border:1px solid #a8a8a8;border-bottom:2px solid #a0a0a0;border-radius:3px;box-sizing:border-box"></div>
<div class="b" style="left:1969px;top:64px;width:21px;height:22.5px;background:#f4f4f4;border:1px solid #a8a8a8;border-bottom:2px solid #a0a0a0;border-radius:3px;box-sizing:border-box"></div>
<span class="t" style="left:1930.81px;transform:scaleX(1.1213);top:68px;font-size:14.5px;color:#555;">alt/</span>
<svg class="b" style="left:1952.6px;top:72.2px;" width="12" height="8" viewBox="0 0 12 8"><path d="M0.4 1.2 H3.8 L7.2 6.6 H11.4 M7 1.2 H11.4" fill="none" stroke="#555" stroke-width="1.2"/></svg>
<span class="t" style="left:1974.81px;transform:scaleX(1.0824);top:67px;font-size:15px;color:#555;">c</span>
<svg class="b" style="left:0;top:52px" width="50" height="220" viewBox="0 52 50 220"><circle cx="17" cy="67" r="3.7" fill="none" stroke="#333" stroke-width="2"/><circle cx="17" cy="82" r="2.4" fill="#333"/><circle cx="25.6" cy="73" r="2.4" fill="#333"/><path d="M17 70.7 V82 M17 79.5 Q17 76.5 20 76 L25.6 73" fill="none" stroke="#333" stroke-width="2"/><path d="M25 65 H36.6 M31 71.2 H36.6 M31 77.2 H36.6 M25 83.1 H36.6" stroke="#333" stroke-width="2.4"/><circle cx="19.5" cy="117.5" r="3.7" fill="#333"/><path d="M19.5 106.5 V113 M19.5 122 V128.6" stroke="#333" stroke-width="2.6" stroke-dasharray="2.2 1.6"/><path d="M31 119 V129.4 M25.8 124.2 H36.2" stroke="#1452b3" stroke-width="2.6"/><ellipse cx="25" cy="159" rx="12" ry="8.2" fill="#333"/><path d="M17 164 L13.4 171.8 L24 166 Z" fill="#333"/><circle cx="26.8" cy="206" r="8.3" fill="none" stroke="#333" stroke-width="2.3"/><path d="M23.6 195 H30 M26.8 195 V198 M33.5 198.6 L35 197.2 M26.4 206.4 L30 202.4" stroke="#333" stroke-width="2.1"/><path d="M14.5 203 H20 M13.2 206 H19.4 M14.5 209 H20" stroke="#333" stroke-width="1.3"/></svg><svg class="b" style="left:14px;top:238px;" width="22" height="24" viewBox="0 0 22 24"><rect x="1.2" y="1.2" width="18.6" height="20.6" rx="2.5" fill="none" stroke="#333" stroke-width="2.2"/><g stroke="#333" stroke-width="2" fill="none"><path d="M10.2 6.5 H16.6 M10.2 12 H16.6 M10.2 17.3 H16.6"/><path d="M4 6.5 L5.8 8.2 L8.8 4.6 M4 12 L5.8 13.7 L8.8 10.1 M4 17.3 L5.8 19 L8.8 15.4" stroke-width="1.5"/></g></svg><svg class="b" style="left:12px;top:1267px;" width="26" height="24" viewBox="0 0 26 24"><path d="M1.2 2.6 H23.6 V11.4 H19 A6.4 6.4 0 0 0 7.2 11.4 L7 12.4 H1.2 Z" fill="#333"/><circle cx="13.4" cy="12" r="4.6" fill="#fff" stroke="#333" stroke-width="2.1"/><path d="M17 15.8 L22.4 20.2" stroke="#333" stroke-width="2.6" stroke-linecap="round"/></svg>
<span class="t" style="left:54.92px;transform:scaleX(0.9644);top:109px;font-size:16.7px;color:#222;font-weight:bold;">Features (22)</span>
<svg class="b" style="left:219px;top:106px;" width="25" height="21" viewBox="0 0 25 21"><path d="M1.5 5 V1.5 H8.5 L10.5 4 H23 V19.5 H7.5" fill="none" stroke="#b0b0b0" stroke-width="1.4"/><path d="M1.5 16 V19.5 H4" fill="none" stroke="#b0b0b0" stroke-width="1.2" stroke-dasharray="1.6 1.2"/><path d="M6.3 7 V17 M1.3 12 H11.3" stroke="#93a7dd" stroke-width="2"/></svg>
<svg class="b" style="left:257px;top:104px;" width="24" height="25" viewBox="0 0 24 25"><circle cx="11.5" cy="14.5" r="8.4" fill="none" stroke="#222" stroke-width="2.4"/><path d="M8 2.2 H15 M11.5 2.2 V6 M18.5 6.2 L20 4.8" stroke="#222" stroke-width="2.2"/><path d="M11.5 14 L15 18" stroke="#222" stroke-width="1.6"/></svg>
<svg class="b" style="left:63px;top:144px;" width="20" height="19" viewBox="0 0 20 19"><path d="M1.2 1.2 H18.8 L11.6 9.6 V17.6 L8.4 15.6 V9.6 Z" fill="none" stroke="#333" stroke-width="1.6" stroke-linejoin="round"/></svg>
<div class="b" style="left:99px;top:135px;width:197px;height:37px;background:#fff;border:1px solid #999;border-radius:4px;box-sizing:border-box"></div>
<span class="t" style="left:106.81px;transform:scaleX(0.9610);top:147px;font-size:16.7px;color:#8a8a8a;font-style:italic;">Filter by name or type</span>
<div class="b" style="left:279px;top:173px;width:21px;height:677px;background:#f1f1f1"></div>
<div class="b" style="left:281px;top:193px;width:17px;height:491px;background:#c1c1c1"></div>
<svg class="b" style="left:284.5px;top:181px;" width="9" height="5" viewBox="0 0 9 5"><path d="M0 5 H9 L4.5 0 Z" fill="#a8a8a8"/></svg>
<svg class="b" style="left:285px;top:836px;" width="9" height="5" viewBox="0 0 9 5"><path d="M0 0 H9 L4.5 5 Z" fill="#444"/></svg>
<div class="b" style="left:51px;top:531px;width:228px;height:29.5px;background:#e9eef5"></div>
<div class="b" style="left:51px;top:559.5px;width:228px;height:1.5px;background:#9cc7e6"></div>
<div class="b" style="left:51px;top:563px;width:228px;height:30px;background:#aed9f5"></div>
<div class="b" style="left:80px;top:606px;width:193px;height:8.7px;background:#bdbdbd"></div>
<div class="b" style="left:61px;top:205px;width:2px;height:129.5px;background:#cfcfcf"></div><div class="b" style="left:56px;top:333.5px;width:12px;height:2px;background:#cfcfcf"></div>
<div class="b" style="left:61px;top:367px;width:2px;height:130px;background:#cfcfcf"></div><div class="b" style="left:56px;top:496px;width:12px;height:2px;background:#cfcfcf"></div>
<div class="b" style="left:61px;top:562px;width:2px;height:227.5px;background:#cfcfcf"></div><div class="b" style="left:56px;top:788.5px;width:12px;height:2px;background:#cfcfcf"></div>
<div class="b" style="left:61px;top:563px;width:2px;height:30px;background:#9ccbea"></div>
<span class="t" style="left:78.32px;transform:scaleX(1.0066);top:181px;font-size:16.7px;color:#333;">Default geometry</span>
<svg class="b" style="left:55px;top:183.10000000000002px;" width="16" height="10" viewBox="0 0 16 10"><path d="M1.2 1.6 L7.6 7.6 L14 1.6" fill="none" stroke="#444" stroke-width="2.8"/></svg>
<span class="t" style="left:106.01px;transform:scaleX(1.0014);top:214px;font-size:16.7px;color:#333;">Origin</span>
<svg class="b" style="left:85px;top:216.10000000000002px;" width="11" height="11" viewBox="0 0 11 11"><circle cx="5.5" cy="5.5" r="4.1" fill="none" stroke="#444" stroke-width="1.2"/><circle cx="5.5" cy="5.5" r="1.7" fill="#333"/></svg>
<span class="t" style="left:106.92px;transform:scaleX(1.0259);top:246px;font-size:16.7px;color:#a9a9a9;">Top</span>
<svg class="b" style="left:80px;top:242.0px;" width="22" height="22" viewBox="0 0 22 22"><path d="M2.4 2 L19.6 5.2 V20 L2.4 16.8 Z" fill="#e4e4e4" stroke="#b0b0b0" stroke-width="1.4" stroke-linejoin="round"/><path d="M11 3.6 V10.8 L19.6 12.6" fill="none" stroke="#b0b0b0" stroke-width="1.4"/></svg>
<span class="t" style="left:105.90px;transform:scaleX(1.0251);top:279px;font-size:16.7px;color:#a9a9a9;">Front</span>
<svg class="b" style="left:80px;top:275.0px;" width="22" height="22" viewBox="0 0 22 22"><path d="M2.4 2 L19.6 5.2 V20 L2.4 16.8 Z" fill="#e4e4e4" stroke="#b0b0b0" stroke-width="1.4" stroke-linejoin="round"/><path d="M11 3.6 V10.8 L19.6 12.6" fill="none" stroke="#b0b0b0" stroke-width="1.4"/></svg>
<span class="t" style="left:105.96px;transform:scaleX(0.9793);top:311px;font-size:16.7px;color:#a9a9a9;">Right</span>
<svg class="b" style="left:80px;top:306.90000000000003px;" width="22" height="22" viewBox="0 0 22 22"><path d="M2.4 2 L19.6 5.2 V20 L2.4 16.8 Z" fill="#e4e4e4" stroke="#b0b0b0" stroke-width="1.4" stroke-linejoin="round"/><path d="M11 3.6 V10.8 L19.6 12.6" fill="none" stroke="#b0b0b0" stroke-width="1.4"/></svg>
<span class="t" style="left:107.05px;transform:scaleX(0.9838);top:344px;font-size:16.7px;color:#333;">Frame (4)</span>
<svg class="b" style="left:55px;top:345.8px;" width="16" height="10" viewBox="0 0 16 10"><path d="M1.2 1.6 L7.6 7.6 L14 1.6" fill="none" stroke="#444" stroke-width="2.8"/></svg><svg class="b" style="left:82px;top:342.8px;" width="19.5" height="15.5" viewBox="0 0 19.5 15.5"><path d="M0.75 14.75 V1.25 H7.02 L8.97 3.1 H18.75 V14.75 Z" fill="none" stroke="#444" stroke-width="1.5" stroke-linejoin="round"/></svg>
<span class="t" style="left:106.93px;transform:scaleX(0.9791);top:376px;font-size:16.7px;color:#a9a9a9;">Tube Sketch</span>
<svg class="b" style="left:80px;top:372.0px;" width="20" height="22" viewBox="0 0 20 22"><path d="M3.2 17.2 L4.6 12.4 L15 1.8 L18.2 5 L7.8 15.6 Z M4.6 12.4 L7.8 15.6" fill="none" stroke="#aaa" stroke-width="1.4" stroke-linejoin="round"/><path d="M0.5 19.6 H19.5" stroke="#a9b6e0" stroke-width="1.3"/></svg>
<span class="t" style="left:105.96px;transform:scaleX(0.9773);top:409px;font-size:16.7px;color:#333;">Extrude Indi...</span>
<svg class="b" style="left:80px;top:405.0px;" width="22" height="22" viewBox="0 0 22 22"><path d="M2 2 H15.6 L19.2 5 V19 H5.2 L2 16.2 Z" fill="#f6f6f6" stroke="#8a8a8a" stroke-width="1.1" stroke-linejoin="round"/><path d="M3.9 4.2 H18.9 V18.8 H3.9 Z" fill="#8b8b8b"/><path d="M3.9 4.2 H11 V11.4 H3.9 Z" fill="#b4b4b4"/><path d="M3.9 11.4 H11 V18.8 H3.9 Z" fill="#a2a2a2"/><path d="M11 4.2 V18.8 M3.9 11.4 H11" stroke="#7a7a7a" stroke-width="0.7"/></svg>
<svg class="b" style="left:224.5px;top:405.0px;" width="10" height="22" viewBox="0 0 10 22"><circle cx="5" cy="11" r="3.7" fill="#2c2c2c"/><path d="M5 0 V6 M5 16 V22" stroke="#2c2c2c" stroke-width="2.5" stroke-dasharray="2.1 1.6"/></svg>
<span class="t" style="left:106.94px;transform:scaleX(0.9603);top:441px;font-size:16.7px;color:#333;">Tube Conver...</span>
<svg class="b" style="left:79px;top:436.90000000000003px;" width="22" height="22" viewBox="0 0 22 22"><path d="M1.5 2.5 L10 1.5 L20.5 6 V20.5 L11.5 19.8 L1.5 15.2 Z" fill="#f2f2f2" stroke="#444" stroke-width="1.5" stroke-linejoin="round"/><path d="M1.5 2.5 L11.5 6.6 V19.8 M11.5 6.6 L20.5 6" fill="none" stroke="#444" stroke-width="1.3"/><path d="M12.6 7.6 L19.4 7.2 V19.4 L12.6 18.8 Z" fill="#a8a8a8" stroke="#666" stroke-width="0.8"/><path d="M13.4 8.4 L18.4 8.2 L13.4 15.6 Z" fill="#707070"/><g fill="#6a6a6a" stroke="#444" stroke-width="0.8"><ellipse cx="4.6" cy="6.8" rx="1.3" ry="1.9"/><ellipse cx="8.8" cy="9" rx="1.3" ry="1.9"/><ellipse cx="4.6" cy="12.4" rx="1.3" ry="1.9"/><ellipse cx="8.8" cy="14.8" rx="1.3" ry="1.9"/></g></svg>
<svg class="b" style="left:224.5px;top:436.90000000000003px;" width="10" height="22" viewBox="0 0 10 22"><circle cx="5" cy="11" r="3.7" fill="#2c2c2c"/><path d="M5 0 V6 M5 16 V22" stroke="#2c2c2c" stroke-width="2.5" stroke-dasharray="2.1 1.6"/></svg>
<span class="t" style="left:106.51px;transform:scaleX(0.9456);top:474px;font-size:16.7px;color:#333;">Gusset 1</span>
<svg class="b" style="left:79px;top:469.8px;" width="22" height="22" viewBox="0 0 22 22"><path d="M4 2 L15 1.6 Q20.4 2.6 19.4 6.6 L10.4 17.6 Q8 19.8 5.6 18 L2.6 15.6 Q1.4 14.6 1.4 12.6 V5 Q1.4 2.4 4 2 Z" fill="#f4f4f4" stroke="#3a3a3a" stroke-width="1.6" stroke-linejoin="round"/><path d="M5.4 5 Q4 6 4 8 V12.6 Q4 14 5 15" fill="none" stroke="#3a3a3a" stroke-width="1.1"/><g fill="#5e5e5e" stroke="#8a8a8a" stroke-width="0.9"><circle cx="7.6" cy="6.6" r="2.3"/><circle cx="16" cy="6.4" r="2.3"/><circle cx="7.6" cy="15" r="2.3"/></g></svg>
<svg class="b" style="left:224.5px;top:469.8px;" width="10" height="22" viewBox="0 0 10 22"><circle cx="5" cy="11" r="3.7" fill="#2c2c2c"/><path d="M5 0 V6 M5 16 V22" stroke="#2c2c2c" stroke-width="2.5" stroke-dasharray="2.1 1.6"/></svg>
<span class="t" style="left:82.19px;transform:scaleX(0.9678);top:506px;font-size:16.7px;color:#333;">Gearbox Layout</span>
<svg class="b" style="left:56px;top:502.0px;" width="20" height="22" viewBox="0 0 20 22"><path d="M3.2 17.2 L4.6 12.4 L15 1.8 L18.2 5 L7.8 15.6 Z M4.6 12.4 L7.8 15.6" fill="none" stroke="#444" stroke-width="1.4" stroke-linejoin="round"/><path d="M0.5 19.6 H19.5" stroke="#6f86d0" stroke-width="1.3"/></svg>
<span class="t" style="left:107.60px;transform:scaleX(0.9563);top:539px;font-size:16.7px;color:#333;">GB Plates (6)</span>
<svg class="b" style="left:55px;top:541.0px;" width="16" height="10" viewBox="0 0 16 10"><path d="M1.2 1.6 L7.6 7.6 L14 1.6" fill="none" stroke="#444" stroke-width="2.8"/></svg><svg class="b" style="left:82px;top:538.0px;" width="19.5" height="15.5" viewBox="0 0 19.5 15.5"><path d="M0.75 14.75 V1.25 H7.02 L8.97 3.1 H18.75 V14.75 Z" fill="none" stroke="#444" stroke-width="1.5" stroke-linejoin="round"/></svg>
<span class="t" style="left:106.19px;transform:scaleX(0.9908);top:571px;font-size:16.7px;color:#5682a3;font-weight:bold;">Plate Sketch</span>
<svg class="b" style="left:80px;top:566.9px;" width="20" height="22" viewBox="0 0 20 22"><path d="M3.2 17.2 L4.6 12.4 L15 1.8 L18.2 5 L7.8 15.6 Z M4.6 12.4 L7.8 15.6" fill="none" stroke="#5d86a8" stroke-width="1.4" stroke-linejoin="round"/><path d="M0.5 19.6 H19.5" stroke="#6f9fd0" stroke-width="1.3"/></svg>
<span class="t" style="left:107.29px;transform:scaleX(0.9995);top:636px;font-size:16.7px;color:#a9a9a9;font-style:italic;">Plate Extrude</span>
<svg class="b" style="left:81px;top:632.3px;" width="22" height="22" viewBox="0 0 22 22"><path d="M1.6 1.8 H15.6 L19.4 5.4 V19.6 H5.4 L1.6 16 Z" fill="#fff" stroke="#a0a0a0" stroke-width="1.2" stroke-linejoin="round"/><path d="M1.6 1.8 L5.4 5.4 H19.4 M5.4 5.4 V19.6" fill="none" stroke="#a0a0a0" stroke-width="1"/><path d="M8 10 L10.4 7.8 H17.4 L19.4 10 V19.6 H8 Z" fill="#c9c9c9" stroke="#a0a0a0" stroke-width="1" stroke-linejoin="round"/><path d="M10.6 10.4 H19.2 M10.6 10.4 V19.4 M10.6 10.4 L8.4 8.2" stroke="#aaa" stroke-width="0.8" fill="none"/></svg>
<span class="t" style="left:107.13px;transform:scaleX(1.0106);top:669px;font-size:16.7px;color:#a9a9a9;font-style:italic;">Inner plate</span>
<svg class="b" style="left:80px;top:665.0999999999999px;" width="20" height="22" viewBox="0 0 20 22"><path d="M3.2 17.2 L4.6 12.4 L15 1.8 L18.2 5 L7.8 15.6 Z M4.6 12.4 L7.8 15.6" fill="none" stroke="#aaa" stroke-width="1.4" stroke-linejoin="round"/><path d="M0.5 19.6 H19.5" stroke="#a9b6e0" stroke-width="1.3"/></svg>
<span class="t" style="left:107.29px;transform:scaleX(0.9946);top:701px;font-size:16.7px;color:#a9a9a9;font-style:italic;">Extrude 2</span>
<svg class="b" style="left:81px;top:697.0999999999999px;" width="22" height="22" viewBox="0 0 22 22"><path d="M1.6 1.8 H15.6 L19.4 5.4 V19.6 H5.4 L1.6 16 Z" fill="#fff" stroke="#a0a0a0" stroke-width="1.2" stroke-linejoin="round"/><path d="M1.6 1.8 L5.4 5.4 H19.4 M5.4 5.4 V19.6" fill="none" stroke="#a0a0a0" stroke-width="1"/><path d="M8 10 L10.4 7.8 H17.4 L19.4 10 V19.6 H8 Z" fill="#c9c9c9" stroke="#a0a0a0" stroke-width="1" stroke-linejoin="round"/><path d="M10.6 10.4 H19.2 M10.6 10.4 V19.4 M10.6 10.4 L8.4 8.2" stroke="#aaa" stroke-width="0.8" fill="none"/></svg>
<span class="t" style="left:107.26px;transform:scaleX(1.0417);top:734px;font-size:16.7px;color:#a9a9a9;font-style:italic;">Fillet 1</span>
<svg class="b" style="left:81px;top:730.0px;" width="22" height="22" viewBox="0 0 22 22"><path d="M1.6 10 Q1.6 1.8 10 1.8 H16 L19.6 5.4 V19.6 H5.4 L1.6 16 Z" fill="#fff" stroke="#a0a0a0" stroke-width="1.2" stroke-linejoin="round"/><path d="M1.6 10 Q1.6 1.8 10 1.8 L12 4.4 Q5.6 5 4 12.6 Z" fill="#c4c4c4" stroke="#a0a0a0" stroke-width="0.8"/><path d="M5.4 19.6 V12 Q6 6 12.4 5.4 H19.6" fill="none" stroke="#a8a8a8" stroke-width="1"/></svg>
<span class="t" style="left:107.77px;transform:scaleX(0.9451);top:766px;font-size:16.7px;color:#a9a9a9;font-style:italic;">?</span>
<svg class="b" style="left:80px;top:762.3px;" width="22" height="22" viewBox="0 0 22 22"><path d="M1 13.6 L6 2.6 Q12 -0.4 19.6 5.6 L14 21" fill="#fff" stroke="#9a9a9a" stroke-width="1.4" stroke-linejoin="round"/><path d="M14 21 L19.6 5.6" stroke="#777" stroke-width="2"/><ellipse cx="13" cy="5" rx="3.4" ry="1.5" transform="rotate(24 13 5)" fill="#ddd" stroke="#aaa" stroke-width="0.8"/><path d="M9 20 L13.4 8" stroke="#ddd" stroke-width="1.2"/></svg>
<svg class="b" style="left:224.5px;top:762.3px;" width="10" height="22" viewBox="0 0 10 22"><circle cx="5" cy="11" r="3.7" fill="#2c2c2c"/><path d="M5 0 V6 M5 16 V22" stroke="#2c2c2c" stroke-width="2.5" stroke-dasharray="2.1 1.6"/></svg>
<span class="t" style="left:83.85px;transform:scaleX(0.9657);top:799px;font-size:16.7px;color:#a9a9a9;font-style:italic;">? teeth (5 mm ...</span>
<div class="b" style="left:56.3px;top:796.5999999999999px;width:20.5px;height:18.5px;border:1px solid #bbb;border-radius:2.5px;box-sizing:border-box;background:#fff"></div><span class="t" style="left:58.62px;transform:scaleX(0.9015);top:801px;font-size:12.6px;color:#9a9a9a;">CB</span>
<svg class="b" style="left:224.5px;top:795.0999999999999px;" width="10" height="22" viewBox="0 0 10 22"><circle cx="5" cy="11" r="3.7" fill="#2c2c2c"/><path d="M5 0 V6 M5 16 V22" stroke="#2c2c2c" stroke-width="2.5" stroke-dasharray="2.1 1.6"/></svg>
<span class="t" style="left:83.81px;transform:scaleX(0.9955);top:831px;font-size:16.7px;color:#a9a9a9;font-style:italic;">?</span>
<svg class="b" style="left:55px;top:826.8px;" width="22" height="22" viewBox="0 0 22 22"><path d="M1 13.6 L6 2.6 Q12 -0.4 19.6 5.6 L14 21" fill="#fff" stroke="#9a9a9a" stroke-width="1.4" stroke-linejoin="round"/><path d="M14 21 L19.6 5.6" stroke="#777" stroke-width="2"/><ellipse cx="13" cy="5" rx="3.4" ry="1.5" transform="rotate(24 13 5)" fill="#ddd" stroke="#aaa" stroke-width="0.8"/><path d="M9 20 L13.4 8" stroke="#ddd" stroke-width="1.2"/><path d="M3.2 10 Q10 13.4 17.6 10.6" fill="none" stroke="#aaa" stroke-width="0.9"/><path d="M1 22 L4.6 13.6 M6 22 L9.4 14.6" stroke="#bbb" stroke-width="1"/></svg>
<svg class="b" style="left:224.5px;top:826.8px;" width="10" height="22" viewBox="0 0 10 22"><circle cx="5" cy="11" r="3.7" fill="#2c2c2c"/><path d="M5 0 V6 M5 16 V22" stroke="#2c2c2c" stroke-width="2.5" stroke-dasharray="2.1 1.6"/></svg>
<div class="b" style="left:51px;top:850px;width:250px;height:1px;background:#d6d6d6"></div>
<span class="t" style="left:78.34px;transform:scaleX(0.9922);top:860px;font-size:16.7px;color:#333;">Parts (4)</span>
<svg class="b" style="left:55px;top:862px;" width="16" height="10" viewBox="0 0 16 10"><path d="M1.2 1.6 L7.6 7.6 L14 1.6" fill="none" stroke="#444" stroke-width="2.8"/></svg>
<span class="t" style="left:106.23px;transform:scaleX(0.9867);top:892px;font-size:16.7px;color:#333;">Tube 1"x1"x7"</span>
<svg class="b" style="left:81px;top:889.1999999999999px;" width="20" height="19" viewBox="0 0 20 19"><path d="M1.2 10.4 L4.2 8.4 H8.4 V3.4 L11.4 1.4 H15.6 L18.8 3.8 V17.2 H4.4 L1.2 14.8 Z" fill="#fff" stroke="#555" stroke-width="1.3" stroke-linejoin="round"/><path d="M1.2 10.4 L4.4 12.6 H11.6 V3.8 L8.4 3.4 M11.6 3.8 H18.8 M11.6 3.8 L15.6 1.4 M4.4 12.6 V17.2 M11.6 12.6 L8.4 8.4" fill="none" stroke="#555" stroke-width="1"/></svg>
<span class="t" style="left:106.23px;transform:scaleX(0.9867);top:925px;font-size:16.7px;color:#333;">Tube 1"x1"x7"</span>
<svg class="b" style="left:81px;top:921.9px;" width="20" height="19" viewBox="0 0 20 19"><path d="M1.2 10.4 L4.2 8.4 H8.4 V3.4 L11.4 1.4 H15.6 L18.8 3.8 V17.2 H4.4 L1.2 14.8 Z" fill="#fff" stroke="#555" stroke-width="1.3" stroke-linejoin="round"/><path d="M1.2 10.4 L4.4 12.6 H11.6 V3.8 L8.4 3.4 M11.6 3.8 H18.8 M11.6 3.8 L15.6 1.4 M4.4 12.6 V17.2 M11.6 12.6 L8.4 8.4" fill="none" stroke="#555" stroke-width="1"/></svg>
<span class="t" style="left:106.23px;transform:scaleX(0.9867);top:957px;font-size:16.7px;color:#333;">Tube 1"x1"x8"</span>
<svg class="b" style="left:81px;top:954.0px;" width="20" height="19" viewBox="0 0 20 19"><path d="M1.2 10.4 L4.2 8.4 H8.4 V3.4 L11.4 1.4 H15.6 L18.8 3.8 V17.2 H4.4 L1.2 14.8 Z" fill="#fff" stroke="#555" stroke-width="1.3" stroke-linejoin="round"/><path d="M1.2 10.4 L4.4 12.6 H11.6 V3.8 L8.4 3.4 M11.6 3.8 H18.8 M11.6 3.8 L15.6 1.4 M4.4 12.6 V17.2 M11.6 12.6 L8.4 8.4" fill="none" stroke="#555" stroke-width="1"/></svg>
<span class="t" style="left:105.26px;transform:scaleX(0.9806);top:990px;font-size:16.7px;color:#333;">Frame Gusset</span>
<svg class="b" style="left:81px;top:987.1999999999999px;" width="20" height="19" viewBox="0 0 20 19"><path d="M1.2 10.4 L4.2 8.4 H8.4 V3.4 L11.4 1.4 H15.6 L18.8 3.8 V17.2 H4.4 L1.2 14.8 Z" fill="#fff" stroke="#555" stroke-width="1.3" stroke-linejoin="round"/><path d="M1.2 10.4 L4.4 12.6 H11.6 V3.8 L8.4 3.4 M11.6 3.8 H18.8 M11.6 3.8 L15.6 1.4 M4.4 12.6 V17.2 M11.6 12.6 L8.4 8.4" fill="none" stroke="#555" stroke-width="1"/></svg>
<div class="b" style="left:308px;top:645px;width:40px;height:41.5px;background:#fff;border:1px solid #a6a6a6;border-left:none;box-sizing:border-box"></div>
<svg class="b" style="left:312.3px;top:655px;" width="28" height="26" viewBox="0 0 28 26"><path d="M3.5 2.2 L6.8 5 L10.2 2.2" fill="none" stroke="#333" stroke-width="1.4"/><path d="M6.8 8 V22.5" stroke="#555" stroke-width="1.6"/><path d="M13.5 3.2 H25 M9 9.6 H25 M9 16 H25 M9 22.2 H25" stroke="#555" stroke-width="1.4"/></svg>
<!-- dialog -->
<div class="b" style="left:334px;top:100px;width:275px;height:270px;background:#fff;box-shadow:0 5px 10px rgba(0,0,0,0.3),0 1px 3px rgba(0,0,0,0.12)"></div>
<div class="b" style="left:334px;top:135px;width:275px;height:1px;background:#ddd"></div>
<span class="t" style="left:341.15px;transform:scaleX(0.9714);top:110px;font-size:16.2px;color:#222;font-weight:bold;">Plate Sketch</span>
<div class="b" style="left:539px;top:100px;width:35px;height:35px;background:#0c940e"></div>
<svg class="b" style="left:545px;top:108px;" width="24" height="20" viewBox="0 0 24 20"><path d="M3 10 L9 16 L21 3.5" fill="none" stroke="#fff" stroke-width="3.6"/></svg>
<svg class="b" style="left:583px;top:110px;" width="17" height="17" viewBox="0 0 17 17"><path d="M2 2 L15 15 M15 2 L2 15" stroke="#cb2b3e" stroke-width="3.9"/></svg>
<div class="b" style="left:338px;top:143px;width:235px;height:53px;border:1px solid #ccc;border-radius:3px;box-sizing:border-box;background:#fff"></div>
<span class="t" style="left:345.32px;transform:scaleX(0.9618);top:151px;font-size:13.2px;color:#666;">Sketch plane</span>
<span class="t" style="left:344.96px;transform:scaleX(0.9791);top:172px;font-size:16.7px;color:#555;">Face of Extrude Individual...</span>
<svg class="b" style="left:547px;top:176px;" width="11" height="11" viewBox="0 0 11 11"><path d="M1.5 1.5 L9.5 9.5 M9.5 1.5 L1.5 9.5" stroke="#c8c8c8" stroke-width="1.2"/></svg>
<svg class="b" style="left:578px;top:146px;" width="24" height="24" viewBox="0 0 24 24"><circle cx="11.6" cy="11.6" r="10" fill="none" stroke="#333" stroke-width="1.4"/><circle cx="11.6" cy="11.6" r="7.4" fill="none" stroke="#333" stroke-width="1.4"/><path d="M11.6 11.6 V4.2 A7.4 7.4 0 0 1 19 11.6 Z" fill="#e2e2e2"/><path d="M11.6 4 V12.2 H19" fill="none" stroke="#333" stroke-width="1.5"/></svg>
<div class="b" style="left:339.4px;top:213.20000000000002px;width:14.4px;height:14.4px;background:#1a4fa8;border-radius:3px"></div>
<svg class="b" style="left:339.4px;top:213.20000000000002px;" width="14.4" height="14.4" viewBox="0 0 14.4 14.4"><path d="M3 7.4 L6 10.4 L11.4 4" fill="none" stroke="#fff" stroke-width="2.1"/></svg>
<span class="t" style="left:358.11px;transform:scaleX(1.0162);top:213px;font-size:16.7px;color:#555;">Disable imprinting</span>
<div class="b" style="left:339.4px;top:247.3px;width:14.4px;height:14.4px;background:#fff;border:1px solid #d0d0d0;border-radius:3px;box-sizing:border-box"></div>
<span class="t" style="left:358.74px;transform:scaleX(1.0007);top:247px;font-size:16.7px;color:#555;">Show constraints</span>
<div class="b" style="left:339.4px;top:281.3px;width:14.4px;height:14.4px;background:#fff;border:1px solid #d0d0d0;border-radius:3px;box-sizing:border-box"></div>
<span class="t" style="left:358.76px;transform:scaleX(0.9778);top:281px;font-size:16.7px;color:#555;">Show expressions</span>
<div class="b" style="left:339.4px;top:315.1px;width:14.4px;height:14.4px;background:#1a4fa8;border-radius:3px"></div>
<svg class="b" style="left:339.4px;top:315.1px;" width="14.4" height="14.4" viewBox="0 0 14.4 14.4"><path d="M3 7.4 L6 10.4 L11.4 4" fill="none" stroke="#fff" stroke-width="2.1"/></svg>
<span class="t" style="left:358.75px;transform:scaleX(0.9851);top:315px;font-size:16.7px;color:#555;">Show overdefined</span>
<svg class="b" style="left:587px;top:348px;" width="16" height="16" viewBox="0 0 16 16"><circle cx="7.8" cy="7.8" r="7.6" fill="#ababab"/></svg>
<span class="t" style="left:590.57px;transform:scaleX(1.1029);top:351px;font-size:12.5px;color:#fff;font-weight:bold;">?</span>
<!-- viewcube -->
<svg class="b" style="left:2340px;top:100px" width="220" height="215" viewBox="2340 100 220 215"><path d="M2424.6 173.2 H2470 L2483.6 186.4 V231 L2470 244.8 H2424.6 L2412.6 231 V186.4 Z" fill="#f0f2f4"/><path d="M2425.4 173.2 H2469.4 V181.5 H2425.4 Z M2425.4 236 H2469.4 V244.8 H2425.4 Z M2412.6 186.8 H2420.6 V230.6 H2412.6 Z M2474.6 186.8 H2483.6 V230.6 H2474.6 Z" fill="#e4e7ea"/><rect x="2420" y="181" width="55.4" height="55.4" rx="12" fill="#fdfdfd"/><path d="M2409.3 173.4 V246.6" stroke="#3a34c6" stroke-width="1.9"/><path d="M2408.3 246.6 H2483" stroke="#27a52b" stroke-width="1.9"/><path d="M2447.3 115 L2455.8 126.3 H2438.8 Z M2354.3 208 L2366 199.3 V216.7 Z M2541 208 L2529.2 199.3 V216.7 Z M2447.3 301.4 L2455.8 290 H2438.8 Z" fill="#e4e7ea"/><path d="M2421 131 Q2398 138 2388 152" fill="none" stroke="#e4e7ea" stroke-width="5.8"/><path d="M2381 141 L2381 156.5 L2396 156.5 Z" fill="#e4e7ea"/><path d="M2473 131 Q2496 138 2506 152" fill="none" stroke="#e4e7ea" stroke-width="5.8"/><path d="M2514 141 L2514 156.5 L2499 156.5 Z" fill="#e4e7ea"/><path d="M2504 280.4 L2515 284.6 V297.4 L2504 302 L2493 297.4 V284.6 Z" fill="#d0d0d0" stroke="#222" stroke-width="1.2" stroke-linejoin="round"/><path d="M2504 280.4 L2515 284.6 L2504 289 L2493 284.6 Z" fill="#fff" stroke="#222" stroke-width="1"/><path d="M2493 284.6 L2504 289 V302 L2493 297.4 Z" fill="#a8a8a8" stroke="#222" stroke-width="1"/><path d="M2525.5 288.5 H2535 L2530.2 293.6 Z" fill="#222"/></svg>
<span class="t" style="left:2404.89px;transform:scaleX(0.8090);top:152px;font-size:17px;color:#4a40d2;font-weight:bold;">Z</span>
<span class="t" style="left:2491.07px;transform:scaleX(0.8120);top:238px;font-size:16.5px;color:#35aa38;font-weight:bold;">Y</span>
<span class="t" style="left:2429.48px;transform:scaleX(0.8630);top:199px;font-size:17.2px;color:#444;">Right</span>
<!-- right tools -->
<div class="b" style="left:2520px;top:535.5px;width:42px;height:165px;border:1px solid #a8a8a8;background:#fff;box-sizing:border-box"></div>
<div class="b" style="left:2520px;top:575.8px;width:42px;height:1px;background:#a8a8a8"></div>
<div class="b" style="left:2520px;top:616.8px;width:42px;height:1px;background:#a8a8a8"></div>
<div class="b" style="left:2520px;top:658.5px;width:42px;height:1px;background:#a8a8a8"></div>
<div class="b" style="left:2520px;top:714.5px;width:42px;height:82px;border:1px solid #a8a8a8;background:#fff;box-sizing:border-box"></div>
<div class="b" style="left:2520px;top:754.5px;width:42px;height:1px;background:#a8a8a8"></div>
<svg class="b" style="left:2527px;top:543px;" width="28" height="28" viewBox="0 0 28 28"><path d="M4 17 L12 2 L18 5.5 L11 17 Z" fill="#8a8a8a"/><path d="M11 17 L18.5 6 L24 10.5 L17 17 Z" fill="#b5b5b5"/><path d="M12 2 L15 0.5 L20 4 L18 5.5Z" fill="#6e6e6e"/><rect x="1.5" y="17.2" width="24" height="6.6" rx="1.6" fill="#fff" stroke="#666" stroke-width="1.1"/><path d="M9.5 17.2 V23.8 M17.5 17.2 V23.8" stroke="#888" stroke-width="0.9"/><rect x="17.6" y="17.8" width="7.4" height="5.4" fill="#ccc"/><circle cx="5.4" cy="20.5" r="1.4" fill="none" stroke="#444" stroke-width="0.9"/></svg>
<svg class="b" style="left:2527px;top:585px;" width="28" height="28" viewBox="0 0 28 28"><rect x="1" y="1.5" width="12" height="9.5" fill="#2f62c8"/><path d="M1 4.7 H13 M1 7.9 H13 M5 1.5 V11 M9 1.5 V11" stroke="#9db8ee" stroke-width="0.8"/><path d="M15 5.5 L24.5 10 V20 L15 24.5 L6.5 20 V10.5" fill="#fff" stroke="#222" stroke-width="1.3" stroke-linejoin="round"/><path d="M6.5 10.5 L15 14.6 L24.5 10 M15 14.6 V24.5" fill="none" stroke="#222" stroke-width="1.2"/></svg>
<svg class="b" style="left:2527px;top:626px;" width="28" height="28" viewBox="0 0 28 28"><rect x="1" y="1.5" width="12" height="9" fill="#444"/><path d="M1 4.5 H13 M1 7.5 H13 M5 1.5 V10.5 M9 1.5 V10.5" stroke="#ccc" stroke-width="0.8"/><path d="M14 8.6 L20.6 11.6 V18 L14 21 L7.4 18 V11.6 Z M7.4 11.6 L14 14.6 L20.6 11.6 M14 14.6 V21" fill="#fff" stroke="#222" stroke-width="1.2" stroke-linejoin="round"/><path d="M5 10 Q3 10 3 12.5 V15 Q3 16.6 1.4 16.8 Q3 17 3 18.6 V21 Q3 23.6 5 23.6 M23 6 Q25 6 25 8.5 V13 Q25 14.6 26.6 14.8 Q25 15 25 16.6 V21 Q25 23.6 23 23.6" fill="none" stroke="#444" stroke-width="1.1"/></svg>
<svg class="b" style="left:2527px;top:667px;" width="28" height="28" viewBox="0 0 28 28"><rect x="1" y="1.5" width="12" height="9" fill="#444"/><path d="M1 4.5 H13 M1 7.5 H13 M5 1.5 V10.5 M9 1.5 V10.5" stroke="#ccc" stroke-width="0.8"/><path d="M4.5 9 Q1 16 4.5 23.5 M23 9 Q26.5 16 23 23.5" fill="none" stroke="#222" stroke-width="1.9"/><path d="M8 12.5 Q11.5 11.5 12.6 15.6 Q13.8 20.6 17.4 19.4 M18.6 11.8 Q16 11.4 12.8 15.8 Q9.6 20.4 7 19.4" fill="none" stroke="#222" stroke-width="2.3"/></svg>
<svg class="b" style="left:2526px;top:720px;" width="30" height="30" viewBox="0 0 30 30"><rect x="0" y="0" width="30" height="30" rx="5" fill="#d6d6d6"/><path d="M15 15 L6.2 6.2 A12.4 12.4 0 0 1 23.8 6.2 Z" fill="#79cc4a"/><path d="M15 15 L23.8 6.2 A12.4 12.4 0 0 1 23.8 23.8 Z" fill="#49b0f2"/><path d="M15 15 L23.8 23.8 A12.4 12.4 0 0 1 6.2 23.8 Z" fill="#f2b242"/><path d="M15 15 L6.2 23.8 A12.4 12.4 0 0 1 6.2 6.2 Z" fill="#d8483a"/><path d="M6 6 L24 24 M24 6 L6 24" stroke="#e6e6e6" stroke-width="0.9"/></svg>
<svg class="b" style="left:2526px;top:761px;" width="30" height="30" viewBox="0 0 30 30"><rect x="0" y="0" width="30" height="30" rx="4" fill="#d0d0d0"/><rect x="2.5" y="2.5" width="25" height="25" fill="#1250c4" stroke="#111" stroke-width="1.6"/><text x="4.2" y="22.8" font-family="Liberation Serif, serif" font-weight="bold" font-size="20" fill="#fff" textLength="21.6" lengthAdjust="spacingAndGlyphs">MK</text></svg>
<svg class="b" style="left:2436px;top:1230px;" width="24" height="20" viewBox="0 0 24 20"><ellipse cx="14.2" cy="6.6" rx="6.2" ry="3.8" fill="#fff" stroke="#222" stroke-width="1.5"/><ellipse cx="14.2" cy="6.4" rx="2.9" ry="1.4" fill="none" stroke="#222" stroke-width="1.1"/><path d="M8 6.6 V10.4 H1.8 V16.4 H17 Q20.4 16.2 20.4 12.6 V6.6" fill="none" stroke="#222" stroke-width="1.5" stroke-linejoin="round"/><path d="M4.6 13.4 V16.2 M7.6 13.4 V16.2 M10.6 13.4 V16.2 M13.6 13.4 V16.2 M16.4 13.4 V16.2" stroke="#222" stroke-width="1"/></svg>
<svg class="b" style="left:2478px;top:1230px;" width="28" height="20" viewBox="0 0 28 20"><path d="M1.8 17.4 V15 A12.2 12.4 0 0 1 26.2 15 V17.4 Z" fill="#fff" stroke="#222" stroke-width="1.6" stroke-linejoin="round"/><path d="M6.6 15 A7.4 7.8 0 0 1 21.4 15 H16.4 L14 12.8 L11.6 15 Z" fill="none" stroke="#222" stroke-width="1.5" stroke-linejoin="round"/><path d="M4 13 L5.2 13.4 M5 9.6 L6.2 10.2 M7.4 6.8 L8.2 7.8 M10.6 5 L11 6.2 M14 4.4 V5.6 M17.4 5 L17 6.2 M20.6 6.8 L19.8 7.8 M23 9.6 L21.8 10.2 M24 13 L22.8 13.4" stroke="#444" stroke-width="0.8"/></svg>
<svg class="b" style="left:2524px;top:1229px;" width="24" height="21" viewBox="0 0 24 21"><path d="M4.6 2.4 H18.2 M11.4 2.4 V16.4 M2.8 18 H20.2" stroke="#222" stroke-width="1.9" fill="none"/><path d="M5.9 2.6 L3.4 12.6 M5.9 2.6 L8.4 12.6 M17 2.6 L14.5 12.6 M17 2.6 L19.5 12.6" stroke="#222" stroke-width="1.1"/><path d="M2.8 12 H9 L8.2 13.8 H3.6 Z M13.9 12 H20.1 L19.3 13.8 H14.7 Z" fill="#222"/></svg>
<!-- bottom -->
<div class="b" style="left:50px;top:1256.3px;width:2510px;height:37.7px;background:#d7d7d7"></div>
<div class="b" style="left:0px;top:1293.6px;width:2560px;height:1.4px;background:#1e1e1e"></div>
<div class="b" style="left:50px;top:1256.3px;width:43px;height:37.3px;background:#d2d2d2;border-right:1px solid #c4c4c4;box-sizing:border-box"></div>
<svg class="b" style="left:60px;top:1264px;" width="20" height="20" viewBox="0 0 20 20"><path d="M10 1 V19 M1 10 H19" stroke="#606060" stroke-width="3.4"/></svg>
<svg class="b" style="left:93px;top:1257px" width="210" height="36" viewBox="93 1257 210 36"><path d="M93 1257 H134 L145 1274 L134 1290.8 H93 Z" fill="#e9e9e9"/><path d="M135.5 1257 H281 L292 1274 L281 1290.8 H135.5 L146.5 1274 Z" fill="#fdfdfd"/><path d="M115.4 1261.6 L127.4 1273.4 H126.6 V1283.6 H118.6 V1276.6 H112.8 V1283.6 H104.2 V1273.4 H103.6 Z M121 1262.6 H123.8 V1268.6 L121 1265.8Z" fill="#666"/></svg>
<svg class="b" style="left:158px;top:1264px;" width="22.5" height="17.5" viewBox="0 0 22.5 17.5"><path d="M0.75 16.75 V1.25 H8.1 L10.35 3.5 H21.75 V16.75 Z" fill="none" stroke="#555" stroke-width="1.5" stroke-linejoin="round"/></svg>
<span class="t" style="left:186.57px;transform:scaleX(0.9884);top:1266px;font-size:17.6px;color:#777;">Exercise 3</span>
<div class="b" style="left:295px;top:1258px;width:251px;height:34px;background:#e8e8e8;border-radius:0 0 5px 5px;border:1px solid #cfcfcf;border-top:none;box-sizing:border-box"></div>
<svg class="b" style="left:310px;top:1263px;" width="18" height="18" viewBox="0 0 18 18"><circle cx="9" cy="9" r="8" fill="#5b8fd8"/><circle cx="9" cy="5" r="1.9" fill="#fff"/><path d="M5.6 8.6 H12.4 V12 H5.6 Z M7.4 12 H10.6 V14.6 H7.4Z" fill="#fff"/></svg>
<svg class="b" style="left:332px;top:1262px;" width="24" height="24" viewBox="0 0 24 24"><path d="M1.4 3.6 L5 1.2 H18.4 L22.4 4.6 V20.6 L18.6 22.6 H5.6 L1.4 19.4 Z" fill="#fff" stroke="#444" stroke-width="1.4" stroke-linejoin="round"/><path d="M5.4 5 H15 V14.6 H5.4Z" fill="#8e8e8e" stroke="#444" stroke-width="1"/><path d="M9 8.4 H22 V22 H9 Z" fill="#fff" stroke="#444" stroke-width="1.2"/><path d="M1.4 3.6 L5.4 5 M15 5 L18.4 1.2" stroke="#444" stroke-width="1"/></svg>
<span class="t" style="left:359.56px;transform:scaleX(0.9948);top:1267px;font-size:17.6px;color:#777;">Exercise 3 Assembly</span>
<div class="b" style="left:548px;top:1257px;width:249px;height:35.5px;background:#fff;border-radius:0 0 4px 4px;border-right:1px solid #c6c6c6;box-sizing:border-box"></div>
<div class="b" style="left:549px;top:1290px;width:247px;height:2.4px;background:#17448f;border-radius:0 0 3px 3px"></div>
<svg class="b" style="left:562px;top:1262px;" width="24" height="24" viewBox="0 0 24 24"><path d="M1.6 7.4 L4.8 4.8 H8.6 V21.6 H1.6 Z" fill="#fff" stroke="#444" stroke-width="1.4" stroke-linejoin="round"/><path d="M8.6 6 L11.6 1.6 H18.4 L21.6 4.4 V21 H8.6 Z" fill="#fff" stroke="#444" stroke-width="1.4" stroke-linejoin="round"/><path d="M14 6 V21 M8.6 6 H14 L18.4 1.6" fill="none" stroke="#444" stroke-width="1.1"/></svg>
<span class="t" style="left:587.58px;transform:scaleX(0.9832);top:1267px;font-size:17.6px;color:#444;">Exercise 3 Part Studio</span>
</body></html>
